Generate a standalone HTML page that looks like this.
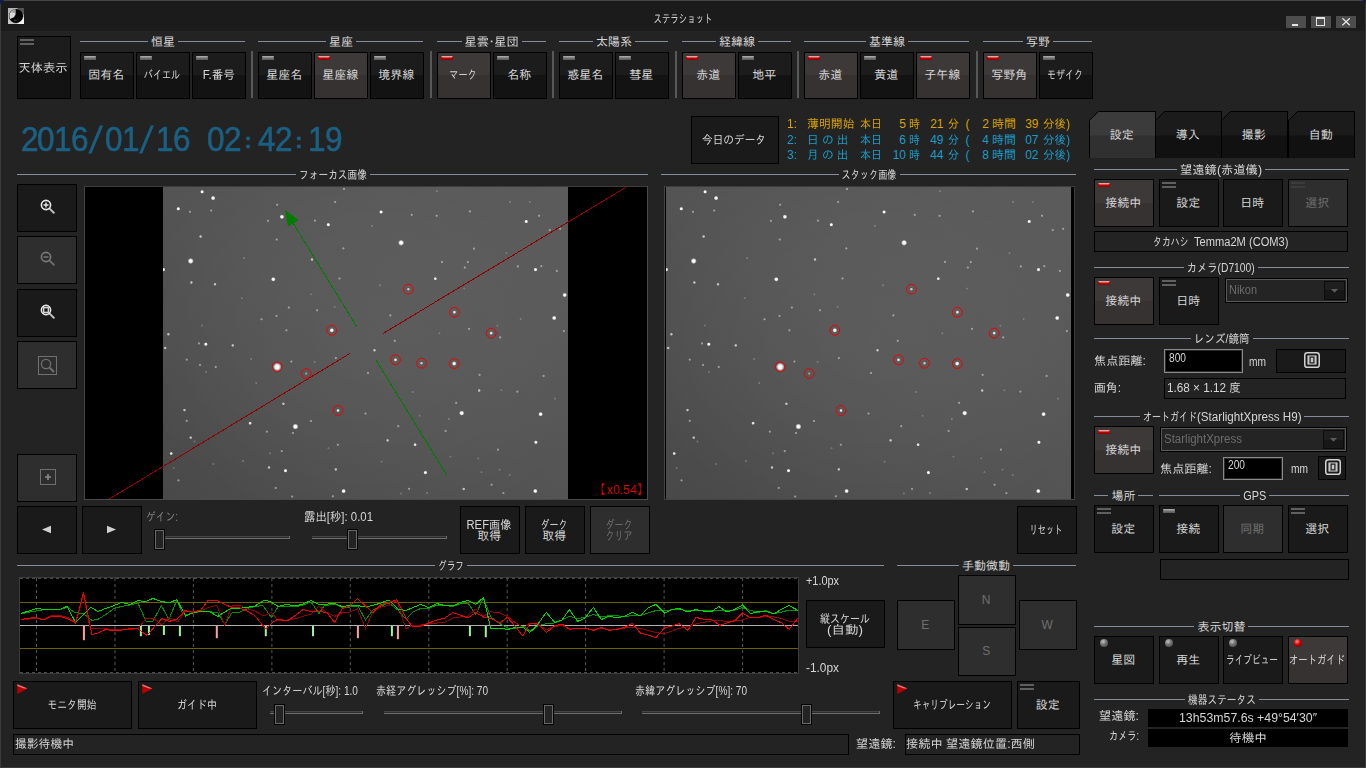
<!DOCTYPE html><html lang="ja"><head><meta charset="utf-8"><title>ステラショット</title><style>html,body{margin:0;padding:0;background:#232323;overflow:hidden}#w{position:relative;width:1366px;height:768px;overflow:hidden;font-family:"Liberation Sans","IPAGothic",sans-serif;font-size:12px}#w>div,#w>svg,#w>span{position:absolute;display:block}.t{white-space:pre}</style></head><body><div id="w"><div style="left:0px;top:0px;width:1366px;height:768px;background:#232323"></div><div style="left:0px;top:0px;width:1366px;height:31px;background:#1b1b1b"></div><div style="left:0px;top:0px;width:1366px;height:1px;background:#444"></div><div style="left:0px;top:0px;width:1px;height:768px;background:#3a3a3a"></div><div style="left:1365px;top:0px;width:1px;height:768px;background:#3a3a3a"></div><div style="left:0px;top:767px;width:1366px;height:1px;background:#3a3a3a"></div><svg style="left:0;top:0" width="4" height="4"><polygon points="0,0 4,0 0,4" fill="#0a2050"/></svg><svg style="left:1362px;top:0" width="4" height="4"><polygon points="0,0 4,0 4,4" fill="#0a2050"/></svg><svg style="left:8px;top:8px" width="16" height="16" viewBox="0 0 16 16"><rect width="16" height="16" fill="#b4b4b4"/><polygon points="9,0 16,0 16,7" fill="#555"/><polygon points="9,16 16,16 16,9" fill="#f4f4f4"/><polygon points="0,10 0,16 6,16" fill="#c8c8c8"/><circle cx="8" cy="8" r="7.1" fill="#000"/><path d="M7.6 8.6 L7.4 1.3 A6.8 6.8 0 0 0 2 11 Z" fill="#d8d8d8"/><path d="M3.2 4.2 A6.6 6.6 0 0 1 7.4 1.4 L7.5 5 Z" fill="#9a9a9a"/><circle cx="8" cy="8.6" r="1.6" fill="#000"/><path d="M6.2 11.6 A3.8 3.8 0 0 0 11.6 8.6 A5 5 0 0 1 6.2 12.6 Z" fill="#6a6a6a"/></svg><span id="t0" class="t" style="font-size:12px;color:#d6d6d6;transform:scaleX(0.7024);left:682.5px;margin-left:-42.00px;transform-origin:50% 50%;top:10.5px;line-height:16px;height:16px;">ステラショット</span><div style="left:1286px;top:16px;width:20px;height:12px;background:#4d4d4d"></div><div style="left:1311px;top:16px;width:20px;height:12px;background:#4d4d4d"></div><div style="left:1336px;top:16px;width:20px;height:12px;background:#4d4d4d"></div><div style="left:1292px;top:24px;width:6px;height:2px;background:#e4e4e4"></div><div style="left:1316px;top:17px;width:7px;height:6px;border:1px solid #e4e4e4;border-top-width:2px"></div><svg style="left:1342px;top:18px" width="8" height="8" viewBox="0 0 8 8"><path d="M0.4 0.3 L7.8 7.3 M7.8 0.3 L0.4 7.3" stroke="#e8e8e8" stroke-width="1.3"/></svg><div style="left:17px;top:36px;width:52px;height:61px;border:1px solid #000;background:linear-gradient(#1c1c1c 50%,#131313 50%)"></div><div style="left:20px;top:39px;width:14px;height:2px;background:#606060"></div><div style="left:20px;top:43px;width:14px;height:2px;background:#606060"></div><span id="t1" class="t" style="font-size:12px;color:#d6d6d6;transform:scaleX(1.0208);left:43.2px;margin-left:-24.00px;transform-origin:50% 50%;top:59.55px;line-height:16px;height:16px;">天体表示</span><div style="left:80px;top:41px;width:68px;height:1px;background:#848d9a"></div><div style="left:178px;top:41px;width:67px;height:1px;background:#848d9a"></div><span id="t2" class="t" style="font-size:12px;color:#d6d6d6;transform:scaleX(1.0000);left:163.0px;margin-left:-12.00px;transform-origin:50% 50%;top:33.5px;line-height:16px;height:16px;">恒星</span><div style="left:80px;top:52px;width:52px;height:45px;border:1px solid #000;background:linear-gradient(#1c1c1c 50%,#131313 50%)"></div><svg style="left:84px;top:56px" width="12" height="4"><rect width="12" height="4" fill="#6e6e6e"/><polygon points="0,0 12,0 10.6,1.4 1.4,1.4" fill="#a6a6a6"/><rect y="3.2" width="12" height=".8" fill="#5a5a5a"/></svg><span id="t3" class="t" style="font-size:12px;color:#d6d6d6;transform:scaleX(1.0000);left:106.2px;margin-left:-18.00px;transform-origin:50% 50%;top:66.75px;line-height:16px;height:16px;">固有名</span><div style="left:136px;top:52px;width:52px;height:45px;border:1px solid #000;background:linear-gradient(#1c1c1c 50%,#131313 50%)"></div><svg style="left:140px;top:56px" width="12" height="4"><rect width="12" height="4" fill="#6e6e6e"/><polygon points="0,0 12,0 10.6,1.4 1.4,1.4" fill="#a6a6a6"/><rect y="3.2" width="12" height=".8" fill="#5a5a5a"/></svg><span id="t4" class="t" style="font-size:12px;color:#d6d6d6;transform:scaleX(0.7604);left:162.2px;margin-left:-24.00px;transform-origin:50% 50%;top:66.75px;line-height:16px;height:16px;">バイエル</span><div style="left:192px;top:52px;width:52px;height:45px;border:1px solid #000;background:linear-gradient(#1c1c1c 50%,#131313 50%)"></div><svg style="left:196px;top:56px" width="12" height="4"><rect width="12" height="4" fill="#6e6e6e"/><polygon points="0,0 12,0 10.6,1.4 1.4,1.4" fill="#a6a6a6"/><rect y="3.2" width="12" height=".8" fill="#5a5a5a"/></svg><span id="t5" class="t" style="font-size:12px;color:#d6d6d6;transform:scaleX(0.9597);left:218.2px;margin-left:-16.67px;transform-origin:50% 50%;top:66.75px;line-height:16px;height:16px;">F.番号</span><div style="left:251px;top:51px;width:2px;height:47px;background:#585858"></div><div style="left:258px;top:41px;width:68px;height:1px;background:#848d9a"></div><div style="left:356px;top:41px;width:67px;height:1px;background:#848d9a"></div><span id="t6" class="t" style="font-size:12px;color:#d6d6d6;transform:scaleX(1.0000);left:341.0px;margin-left:-12.00px;transform-origin:50% 50%;top:33.5px;line-height:16px;height:16px;">星座</span><div style="left:258px;top:52px;width:52px;height:45px;border:1px solid #000;background:linear-gradient(#1c1c1c 50%,#131313 50%)"></div><svg style="left:262px;top:56px" width="12" height="4"><rect width="12" height="4" fill="#6e6e6e"/><polygon points="0,0 12,0 10.6,1.4 1.4,1.4" fill="#a6a6a6"/><rect y="3.2" width="12" height=".8" fill="#5a5a5a"/></svg><span id="t7" class="t" style="font-size:12px;color:#d6d6d6;transform:scaleX(1.0000);left:284.2px;margin-left:-18.00px;transform-origin:50% 50%;top:66.75px;line-height:16px;height:16px;">星座名</span><div style="left:314px;top:52px;width:52px;height:45px;border:1px solid #000;background:linear-gradient(#3d3939 50%,#363232 50%)"></div><svg style="left:318px;top:56px" width="12" height="4"><rect width="12" height="4" fill="#b40000"/><polygon points="0,0 12,0 10.6,1.4 1.4,1.4" fill="#e8a4a4"/><rect y="3.2" width="12" height=".8" fill="#8e0000"/></svg><span id="t8" class="t" style="font-size:12px;color:#d6d6d6;transform:scaleX(1.0000);left:340.2px;margin-left:-18.00px;transform-origin:50% 50%;top:66.75px;line-height:16px;height:16px;">星座線</span><div style="left:370px;top:52px;width:52px;height:45px;border:1px solid #000;background:linear-gradient(#1c1c1c 50%,#131313 50%)"></div><svg style="left:374px;top:56px" width="12" height="4"><rect width="12" height="4" fill="#6e6e6e"/><polygon points="0,0 12,0 10.6,1.4 1.4,1.4" fill="#a6a6a6"/><rect y="3.2" width="12" height=".8" fill="#5a5a5a"/></svg><span id="t9" class="t" style="font-size:12px;color:#d6d6d6;transform:scaleX(1.0000);left:396.2px;margin-left:-18.00px;transform-origin:50% 50%;top:66.75px;line-height:16px;height:16px;">境界線</span><div style="left:430px;top:51px;width:2px;height:47px;background:#585858"></div><div style="left:437px;top:41px;width:25px;height:1px;background:#848d9a"></div><div style="left:522px;top:41px;width:24px;height:1px;background:#848d9a"></div><span id="t10" class="t" style="font-size:12px;color:#d6d6d6;transform:scaleX(1.0147);left:492.0px;margin-left:-26.61px;transform-origin:50% 50%;top:33.5px;line-height:16px;height:16px;">星雲<span style="margin:0 -3.4px">・</span>星団</span><div style="left:437px;top:52px;width:52px;height:45px;border:1px solid #000;background:linear-gradient(#3d3939 50%,#363232 50%)"></div><svg style="left:441px;top:56px" width="12" height="4"><rect width="12" height="4" fill="#b40000"/><polygon points="0,0 12,0 10.6,1.4 1.4,1.4" fill="#e8a4a4"/><rect y="3.2" width="12" height=".8" fill="#8e0000"/></svg><span id="t11" class="t" style="font-size:12px;color:#d6d6d6;transform:scaleX(0.7639);left:463.2px;margin-left:-18.00px;transform-origin:50% 50%;top:66.75px;line-height:16px;height:16px;">マーク</span><div style="left:493px;top:52px;width:52px;height:45px;border:1px solid #000;background:linear-gradient(#1c1c1c 50%,#131313 50%)"></div><svg style="left:497px;top:56px" width="12" height="4"><rect width="12" height="4" fill="#6e6e6e"/><polygon points="0,0 12,0 10.6,1.4 1.4,1.4" fill="#a6a6a6"/><rect y="3.2" width="12" height=".8" fill="#5a5a5a"/></svg><span id="t12" class="t" style="font-size:12px;color:#d6d6d6;transform:scaleX(1.0000);left:519.2px;margin-left:-12.00px;transform-origin:50% 50%;top:66.75px;line-height:16px;height:16px;">名称</span><div style="left:552px;top:51px;width:2px;height:47px;background:#585858"></div><div style="left:559px;top:41px;width:34px;height:1px;background:#848d9a"></div><div style="left:635px;top:41px;width:33px;height:1px;background:#848d9a"></div><span id="t13" class="t" style="font-size:12px;color:#d6d6d6;transform:scaleX(1.0000);left:614.0px;margin-left:-18.00px;transform-origin:50% 50%;top:33.5px;line-height:16px;height:16px;">太陽系</span><div style="left:559px;top:52px;width:52px;height:45px;border:1px solid #000;background:linear-gradient(#1c1c1c 50%,#131313 50%)"></div><svg style="left:563px;top:56px" width="12" height="4"><rect width="12" height="4" fill="#6e6e6e"/><polygon points="0,0 12,0 10.6,1.4 1.4,1.4" fill="#a6a6a6"/><rect y="3.2" width="12" height=".8" fill="#5a5a5a"/></svg><span id="t14" class="t" style="font-size:12px;color:#d6d6d6;transform:scaleX(1.0000);left:585.2px;margin-left:-18.00px;transform-origin:50% 50%;top:66.75px;line-height:16px;height:16px;">惑星名</span><div style="left:615px;top:52px;width:52px;height:45px;border:1px solid #000;background:linear-gradient(#1c1c1c 50%,#131313 50%)"></div><svg style="left:619px;top:56px" width="12" height="4"><rect width="12" height="4" fill="#6e6e6e"/><polygon points="0,0 12,0 10.6,1.4 1.4,1.4" fill="#a6a6a6"/><rect y="3.2" width="12" height=".8" fill="#5a5a5a"/></svg><span id="t15" class="t" style="font-size:12px;color:#d6d6d6;transform:scaleX(1.0000);left:641.2px;margin-left:-12.00px;transform-origin:50% 50%;top:66.75px;line-height:16px;height:16px;">彗星</span><div style="left:675px;top:51px;width:2px;height:47px;background:#585858"></div><div style="left:682px;top:41px;width:34px;height:1px;background:#848d9a"></div><div style="left:758px;top:41px;width:33px;height:1px;background:#848d9a"></div><span id="t16" class="t" style="font-size:12px;color:#d6d6d6;transform:scaleX(1.0000);left:737.0px;margin-left:-18.00px;transform-origin:50% 50%;top:33.5px;line-height:16px;height:16px;">経緯線</span><div style="left:682px;top:52px;width:52px;height:45px;border:1px solid #000;background:linear-gradient(#3d3939 50%,#363232 50%)"></div><svg style="left:686px;top:56px" width="12" height="4"><rect width="12" height="4" fill="#b40000"/><polygon points="0,0 12,0 10.6,1.4 1.4,1.4" fill="#e8a4a4"/><rect y="3.2" width="12" height=".8" fill="#8e0000"/></svg><span id="t17" class="t" style="font-size:12px;color:#d6d6d6;transform:scaleX(1.0000);left:708.2px;margin-left:-12.00px;transform-origin:50% 50%;top:66.75px;line-height:16px;height:16px;">赤道</span><div style="left:738px;top:52px;width:52px;height:45px;border:1px solid #000;background:linear-gradient(#1c1c1c 50%,#131313 50%)"></div><svg style="left:742px;top:56px" width="12" height="4"><rect width="12" height="4" fill="#6e6e6e"/><polygon points="0,0 12,0 10.6,1.4 1.4,1.4" fill="#a6a6a6"/><rect y="3.2" width="12" height=".8" fill="#5a5a5a"/></svg><span id="t18" class="t" style="font-size:12px;color:#d6d6d6;transform:scaleX(1.0000);left:764.2px;margin-left:-12.00px;transform-origin:50% 50%;top:66.75px;line-height:16px;height:16px;">地平</span><div style="left:797px;top:51px;width:2px;height:47px;background:#585858"></div><div style="left:804px;top:41px;width:62px;height:1px;background:#848d9a"></div><div style="left:908px;top:41px;width:61px;height:1px;background:#848d9a"></div><span id="t19" class="t" style="font-size:12px;color:#d6d6d6;transform:scaleX(1.0000);left:887.0px;margin-left:-18.00px;transform-origin:50% 50%;top:33.5px;line-height:16px;height:16px;">基準線</span><div style="left:804px;top:52px;width:52px;height:45px;border:1px solid #000;background:linear-gradient(#3d3939 50%,#363232 50%)"></div><svg style="left:808px;top:56px" width="12" height="4"><rect width="12" height="4" fill="#b40000"/><polygon points="0,0 12,0 10.6,1.4 1.4,1.4" fill="#e8a4a4"/><rect y="3.2" width="12" height=".8" fill="#8e0000"/></svg><span id="t20" class="t" style="font-size:12px;color:#d6d6d6;transform:scaleX(1.0000);left:830.2px;margin-left:-12.00px;transform-origin:50% 50%;top:66.75px;line-height:16px;height:16px;">赤道</span><div style="left:860px;top:52px;width:52px;height:45px;border:1px solid #000;background:linear-gradient(#1c1c1c 50%,#131313 50%)"></div><svg style="left:864px;top:56px" width="12" height="4"><rect width="12" height="4" fill="#6e6e6e"/><polygon points="0,0 12,0 10.6,1.4 1.4,1.4" fill="#a6a6a6"/><rect y="3.2" width="12" height=".8" fill="#5a5a5a"/></svg><span id="t21" class="t" style="font-size:12px;color:#d6d6d6;transform:scaleX(1.0000);left:886.2px;margin-left:-12.00px;transform-origin:50% 50%;top:66.75px;line-height:16px;height:16px;">黄道</span><div style="left:916px;top:52px;width:52px;height:45px;border:1px solid #000;background:linear-gradient(#3d3939 50%,#363232 50%)"></div><svg style="left:920px;top:56px" width="12" height="4"><rect width="12" height="4" fill="#b40000"/><polygon points="0,0 12,0 10.6,1.4 1.4,1.4" fill="#e8a4a4"/><rect y="3.2" width="12" height=".8" fill="#8e0000"/></svg><span id="t22" class="t" style="font-size:12px;color:#d6d6d6;transform:scaleX(1.0000);left:942.2px;margin-left:-18.00px;transform-origin:50% 50%;top:66.75px;line-height:16px;height:16px;">子午線</span><div style="left:976px;top:51px;width:2px;height:47px;background:#585858"></div><div style="left:983px;top:41px;width:40px;height:1px;background:#848d9a"></div><div style="left:1053px;top:41px;width:39px;height:1px;background:#848d9a"></div><span id="t23" class="t" style="font-size:12px;color:#d6d6d6;transform:scaleX(1.0000);left:1038.0px;margin-left:-12.00px;transform-origin:50% 50%;top:33.5px;line-height:16px;height:16px;">写野</span><div style="left:983px;top:52px;width:52px;height:45px;border:1px solid #000;background:linear-gradient(#3d3939 50%,#363232 50%)"></div><svg style="left:987px;top:56px" width="12" height="4"><rect width="12" height="4" fill="#b40000"/><polygon points="0,0 12,0 10.6,1.4 1.4,1.4" fill="#e8a4a4"/><rect y="3.2" width="12" height=".8" fill="#8e0000"/></svg><span id="t24" class="t" style="font-size:12px;color:#d6d6d6;transform:scaleX(1.0000);left:1009.2px;margin-left:-18.00px;transform-origin:50% 50%;top:66.75px;line-height:16px;height:16px;">写野角</span><div style="left:1039px;top:52px;width:52px;height:45px;border:1px solid #000;background:linear-gradient(#1c1c1c 50%,#131313 50%)"></div><svg style="left:1043px;top:56px" width="12" height="4"><rect width="12" height="4" fill="#6e6e6e"/><polygon points="0,0 12,0 10.6,1.4 1.4,1.4" fill="#a6a6a6"/><rect y="3.2" width="12" height=".8" fill="#5a5a5a"/></svg><span id="t25" class="t" style="font-size:12px;color:#d6d6d6;transform:scaleX(0.7500);left:1065.2px;margin-left:-24.00px;transform-origin:50% 50%;top:66.75px;line-height:16px;height:16px;">モザイク</span><div style="left:19.5px;top:114px;height:50px;line-height:50px;display:flex;font-size:35px;color:#1b6083;-webkit-text-stroke:.6px #1b6083;white-space:pre"><span style="display:block;width:16.95px;text-align:center"><span style="display:inline-block;transform:scaleX(.9)">2</span></span><span style="display:block;width:16.95px;text-align:center"><span style="display:inline-block;transform:scaleX(.9)">0</span></span><span style="display:block;width:16.95px;text-align:center"><span style="display:inline-block;transform:scaleX(.9)">1</span></span><span style="display:block;width:16.95px;text-align:center"><span style="display:inline-block;transform:scaleX(.9)">6</span></span><span style="display:block;width:16.95px;text-align:center"><span style="display:inline-block;font-family:'Liberation Mono',monospace;font-size:28.25px;transform:scaleY(1.3)">/</span></span><span style="display:block;width:16.95px;text-align:center"><span style="display:inline-block;transform:scaleX(.9)">0</span></span><span style="display:block;width:16.95px;text-align:center"><span style="display:inline-block;transform:scaleX(.9)">1</span></span><span style="display:block;width:16.95px;text-align:center"><span style="display:inline-block;font-family:'Liberation Mono',monospace;font-size:28.25px;transform:scaleY(1.3)">/</span></span><span style="display:block;width:16.95px;text-align:center"><span style="display:inline-block;transform:scaleX(.9)">1</span></span><span style="display:block;width:16.95px;text-align:center"><span style="display:inline-block;transform:scaleX(.9)">6</span></span><span style="display:block;width:16.95px;text-align:center"><span style="display:inline-block;transform:scaleX(.9)"> </span></span><span style="display:block;width:16.95px;text-align:center"><span style="display:inline-block;transform:scaleX(.9)">0</span></span><span style="display:block;width:16.95px;text-align:center"><span style="display:inline-block;transform:scaleX(.9)">2</span></span><span style="display:block;width:16.95px;text-align:center"><span style="display:inline-block;font-weight:bold;font-size:22px;-webkit-text-stroke:.4px #1b6083;transform:translateY(-3.2px)">:</span></span><span style="display:block;width:16.95px;text-align:center"><span style="display:inline-block;transform:scaleX(.9)">4</span></span><span style="display:block;width:16.95px;text-align:center"><span style="display:inline-block;transform:scaleX(.9)">2</span></span><span style="display:block;width:16.95px;text-align:center"><span style="display:inline-block;font-weight:bold;font-size:22px;-webkit-text-stroke:.4px #1b6083;transform:translateY(-3.2px)">:</span></span><span style="display:block;width:16.95px;text-align:center"><span style="display:inline-block;transform:scaleX(.9)">1</span></span><span style="display:block;width:16.95px;text-align:center"><span style="display:inline-block;transform:scaleX(.9)">9</span></span></div><div style="left:691px;top:116px;width:86px;height:46px;border:1px solid #000;background:#1a1a1a"></div><span id="t26" class="t" style="font-size:12px;color:#d6d6d6;transform:scaleX(0.8889);left:734.2px;margin-left:-36.00px;transform-origin:50% 50%;top:131.75px;line-height:16px;height:16px;">今日のデータ</span><span id="t27" class="t" style="font-size:12px;color:#d9a300;transform:scaleX(0.9984);left:787px;transform-origin:0 50%;top:116.0px;line-height:16px;height:16px;">1:</span><span id="t28" class="t" style="font-size:12px;color:#d9a300;transform:scaleX(0.9896);left:806.5px;transform-origin:0 50%;top:116.0px;line-height:16px;height:16px;">薄明開始</span><span id="t29" class="t" style="font-size:12px;color:#d9a300;transform:scaleX(0.9167);left:859.5px;transform-origin:0 50%;top:116.0px;line-height:16px;height:16px;">本日</span><span id="t30" class="t" style="font-size:12px;color:#d9a300;left:906px;margin-left:-6.69px;transform-origin:100% 50%;top:116.0px;line-height:16px;height:16px;">5</span><span id="t31" class="t" style="font-size:12px;color:#d9a300;transform:scaleX(0.9167);left:909px;transform-origin:0 50%;top:116.0px;line-height:16px;height:16px;">時</span><span id="t32" class="t" style="font-size:12px;color:#d9a300;left:943.5px;margin-left:-13.36px;transform-origin:100% 50%;top:116.0px;line-height:16px;height:16px;">21</span><span id="t33" class="t" style="font-size:12px;color:#d9a300;transform:scaleX(0.9167);left:948px;transform-origin:0 50%;top:116.0px;line-height:16px;height:16px;">分</span><span id="t34" class="t" style="font-size:12px;color:#d9a300;left:965.5px;transform-origin:0 50%;top:116.0px;line-height:16px;height:16px;">(</span><span id="t35" class="t" style="font-size:12px;color:#d9a300;left:989px;margin-left:-6.69px;transform-origin:100% 50%;top:116.0px;line-height:16px;height:16px;">2</span><span id="t36" class="t" style="font-size:12px;color:#d9a300;transform:scaleX(1.0000);left:992px;transform-origin:0 50%;top:116.0px;line-height:16px;height:16px;">時間</span><span id="t37" class="t" style="font-size:12px;color:#d9a300;left:1038.5px;margin-left:-13.36px;transform-origin:100% 50%;top:116.0px;line-height:16px;height:16px;">39</span><span id="t38" class="t" style="font-size:12px;color:#d9a300;transform:scaleX(0.9643);left:1043px;transform-origin:0 50%;top:116.0px;line-height:16px;height:16px;">分後)</span><span id="t39" class="t" style="font-size:12px;color:#1a9cc9;transform:scaleX(0.9984);left:787px;transform-origin:0 50%;top:131.5px;line-height:16px;height:16px;">2:</span><span id="t40" class="t" style="font-size:12px;color:#1a9cc9;transform:scaleX(0.9725);left:806.5px;transform-origin:0 50%;top:131.5px;line-height:16px;height:16px;">日 の 出</span><span id="t41" class="t" style="font-size:12px;color:#1a9cc9;transform:scaleX(0.9167);left:859.5px;transform-origin:0 50%;top:131.5px;line-height:16px;height:16px;">本日</span><span id="t42" class="t" style="font-size:12px;color:#1a9cc9;left:906px;margin-left:-6.69px;transform-origin:100% 50%;top:131.5px;line-height:16px;height:16px;">6</span><span id="t43" class="t" style="font-size:12px;color:#1a9cc9;transform:scaleX(0.9167);left:909px;transform-origin:0 50%;top:131.5px;line-height:16px;height:16px;">時</span><span id="t44" class="t" style="font-size:12px;color:#1a9cc9;left:943.5px;margin-left:-13.36px;transform-origin:100% 50%;top:131.5px;line-height:16px;height:16px;">49</span><span id="t45" class="t" style="font-size:12px;color:#1a9cc9;transform:scaleX(0.9167);left:948px;transform-origin:0 50%;top:131.5px;line-height:16px;height:16px;">分</span><span id="t46" class="t" style="font-size:12px;color:#1a9cc9;left:965.5px;transform-origin:0 50%;top:131.5px;line-height:16px;height:16px;">(</span><span id="t47" class="t" style="font-size:12px;color:#1a9cc9;left:989px;margin-left:-6.69px;transform-origin:100% 50%;top:131.5px;line-height:16px;height:16px;">4</span><span id="t48" class="t" style="font-size:12px;color:#1a9cc9;transform:scaleX(1.0000);left:992px;transform-origin:0 50%;top:131.5px;line-height:16px;height:16px;">時間</span><span id="t49" class="t" style="font-size:12px;color:#1a9cc9;left:1038.5px;margin-left:-13.36px;transform-origin:100% 50%;top:131.5px;line-height:16px;height:16px;">07</span><span id="t50" class="t" style="font-size:12px;color:#1a9cc9;transform:scaleX(0.9643);left:1043px;transform-origin:0 50%;top:131.5px;line-height:16px;height:16px;">分後)</span><span id="t51" class="t" style="font-size:12px;color:#1a9cc9;transform:scaleX(0.9984);left:787px;transform-origin:0 50%;top:147.0px;line-height:16px;height:16px;">3:</span><span id="t52" class="t" style="font-size:12px;color:#1a9cc9;transform:scaleX(0.9725);left:806.5px;transform-origin:0 50%;top:147.0px;line-height:16px;height:16px;">月 の 出</span><span id="t53" class="t" style="font-size:12px;color:#1a9cc9;transform:scaleX(0.9167);left:859.5px;transform-origin:0 50%;top:147.0px;line-height:16px;height:16px;">本日</span><span id="t54" class="t" style="font-size:12px;color:#1a9cc9;left:906px;margin-left:-13.36px;transform-origin:100% 50%;top:147.0px;line-height:16px;height:16px;">10</span><span id="t55" class="t" style="font-size:12px;color:#1a9cc9;transform:scaleX(0.9167);left:909px;transform-origin:0 50%;top:147.0px;line-height:16px;height:16px;">時</span><span id="t56" class="t" style="font-size:12px;color:#1a9cc9;left:943.5px;margin-left:-13.36px;transform-origin:100% 50%;top:147.0px;line-height:16px;height:16px;">44</span><span id="t57" class="t" style="font-size:12px;color:#1a9cc9;transform:scaleX(0.9167);left:948px;transform-origin:0 50%;top:147.0px;line-height:16px;height:16px;">分</span><span id="t58" class="t" style="font-size:12px;color:#1a9cc9;left:965.5px;transform-origin:0 50%;top:147.0px;line-height:16px;height:16px;">(</span><span id="t59" class="t" style="font-size:12px;color:#1a9cc9;left:989px;margin-left:-6.69px;transform-origin:100% 50%;top:147.0px;line-height:16px;height:16px;">8</span><span id="t60" class="t" style="font-size:12px;color:#1a9cc9;transform:scaleX(1.0000);left:992px;transform-origin:0 50%;top:147.0px;line-height:16px;height:16px;">時間</span><span id="t61" class="t" style="font-size:12px;color:#1a9cc9;left:1038.5px;margin-left:-13.36px;transform-origin:100% 50%;top:147.0px;line-height:16px;height:16px;">02</span><span id="t62" class="t" style="font-size:12px;color:#1a9cc9;transform:scaleX(0.9643);left:1043px;transform-origin:0 50%;top:147.0px;line-height:16px;height:16px;">分後)</span><svg style="left:1085px;top:108px" width="275" height="54" viewBox="1085 108 275 54"><polygon points="1089.5,158 1089.5,120.5 1098.5,111.5 1155.5,111.5 1155.5,158" fill="#303030"/><polygon points="1089.5,135.5 1089.5,120.5 1098.5,111.5 1155.5,111.5 1155.5,135.5" fill="#3b3b3b"/><polyline points="1089.5,158 1089.5,120.5 1098.5,111.5 1155.5,111.5 1155.5,158" fill="none" stroke="#000" stroke-width="1"/><polygon points="1155.5,158 1155.5,120.5 1164.5,111.5 1221.5,111.5 1221.5,158" fill="#111"/><polygon points="1155.5,135.5 1155.5,120.5 1164.5,111.5 1221.5,111.5 1221.5,135.5" fill="#1b1b1b"/><polyline points="1155.5,158 1155.5,120.5 1164.5,111.5 1221.5,111.5 1221.5,158" fill="none" stroke="#000" stroke-width="1"/><polygon points="1221.5,158 1221.5,120.5 1230.5,111.5 1287.5,111.5 1287.5,158" fill="#111"/><polygon points="1221.5,135.5 1221.5,120.5 1230.5,111.5 1287.5,111.5 1287.5,135.5" fill="#1b1b1b"/><polyline points="1221.5,158 1221.5,120.5 1230.5,111.5 1287.5,111.5 1287.5,158" fill="none" stroke="#000" stroke-width="1"/><polygon points="1288.5,158 1288.5,120.5 1297.5,111.5 1354.5,111.5 1354.5,158" fill="#111"/><polygon points="1288.5,135.5 1288.5,120.5 1297.5,111.5 1354.5,111.5 1354.5,135.5" fill="#1b1b1b"/><polyline points="1288.5,158 1288.5,120.5 1297.5,111.5 1354.5,111.5 1354.5,158" fill="none" stroke="#000" stroke-width="1"/></svg><span id="t63" class="t" style="font-size:12px;color:#d6d6d6;transform:scaleX(1.0000);left:1121.7px;margin-left:-12.00px;transform-origin:50% 50%;top:127.0px;line-height:16px;height:16px;">設定</span><span id="t64" class="t" style="font-size:12px;color:#d6d6d6;transform:scaleX(1.0000);left:1187.7px;margin-left:-12.00px;transform-origin:50% 50%;top:127.0px;line-height:16px;height:16px;">導入</span><span id="t65" class="t" style="font-size:12px;color:#d6d6d6;transform:scaleX(1.0000);left:1253.7px;margin-left:-12.00px;transform-origin:50% 50%;top:127.0px;line-height:16px;height:16px;">撮影</span><span id="t66" class="t" style="font-size:12px;color:#d6d6d6;transform:scaleX(1.0000);left:1320.7px;margin-left:-12.00px;transform-origin:50% 50%;top:127.0px;line-height:16px;height:16px;">自動</span><div style="left:17px;top:174px;width:279px;height:1px;background:#848d9a"></div><div style="left:370px;top:174px;width:278px;height:1px;background:#848d9a"></div><span id="t67" class="t" style="font-size:12px;color:#d6d6d6;transform:scaleX(0.8095);left:333px;margin-left:-42.00px;transform-origin:50% 50%;top:166.5px;line-height:16px;height:16px;">フォーカス画像</span><div style="left:661px;top:174px;width:178px;height:1px;background:#848d9a"></div><div style="left:900px;top:174px;width:176px;height:1px;background:#848d9a"></div><span id="t68" class="t" style="font-size:12px;color:#d6d6d6;transform:scaleX(0.7639);left:869px;margin-left:-36.00px;transform-origin:50% 50%;top:166.5px;line-height:16px;height:16px;">スタック画像</span><div style="left:17px;top:184px;width:58px;height:46px;border:1px solid #000;background:#1a1a1a"></div><svg style="left:40px;top:199px" width="16" height="16" viewBox="0 0 16 16"><circle cx="6" cy="6" r="4.6" fill="none" stroke="#e8e8e8" stroke-width="1.6"/><path d="M9.6 9.6 L13.8 13.8" stroke="#e8e8e8" stroke-opacity=".8" stroke-width="2" stroke-linecap="round"/><path d="M3.5 6 H8.5 M6 3.5 V8.5" stroke="#e8e8e8" stroke-width="1.4"/></svg><div style="left:17px;top:236px;width:58px;height:46px;border:1px solid #000;background:#2e2e2e"></div><svg style="left:40px;top:251px" width="16" height="16" viewBox="0 0 16 16"><circle cx="6" cy="6" r="4.6" fill="none" stroke="#7a7a7a" stroke-width="1.6"/><path d="M9.6 9.6 L13.8 13.8" stroke="#7a7a7a" stroke-opacity=".8" stroke-width="2" stroke-linecap="round"/><path d="M3.5 6 H8.5" stroke="#7a7a7a" stroke-width="1.4"/></svg><div style="left:17px;top:289px;width:58px;height:46px;border:1px solid #000;background:#1a1a1a"></div><svg style="left:40px;top:304px" width="16" height="16" viewBox="0 0 16 16"><circle cx="6" cy="6" r="4.6" fill="none" stroke="#e8e8e8" stroke-width="1.6"/><path d="M9.6 9.6 L13.8 13.8" stroke="#e8e8e8" stroke-opacity=".8" stroke-width="2" stroke-linecap="round"/><rect x="3.7" y="3.7" width="4.6" height="4.6" fill="none" stroke="#e8e8e8" stroke-width="1.2"/></svg><div style="left:17px;top:341px;width:58px;height:46px;border:1px solid #000;background:#2e2e2e"></div><svg style="left:38px;top:356px" width="19" height="19" viewBox="0 0 19 19"><rect x="0.5" y="0.5" width="18" height="18" fill="none" stroke="#707070"/><circle cx="8" cy="8" r="4.6" fill="none" stroke="#707070" stroke-width="1.3"/><path d="M11.5 11.5 L16 16" stroke="#707070" stroke-width="2"/></svg><div style="left:17px;top:454px;width:58px;height:46px;border:1px solid #000;background:#2e2e2e"></div><svg style="left:40px;top:469px" width="16" height="16" viewBox="0 0 16 16"><rect x="0.5" y="0.5" width="15" height="15" fill="none" stroke="#707070"/><path d="M5 8 H11 M8 5 V11" stroke="#8a8a8a" stroke-width="1.6"/></svg><div style="left:17px;top:506px;width:58px;height:46px;border:1px solid #000;background:#1a1a1a"></div><div style="left:82px;top:506px;width:58px;height:46px;border:1px solid #000;background:#1a1a1a"></div><svg style="left:42px;top:525px" width="10" height="9"><polygon points="9,0.8 9,8.2 0,4.5" fill="#d0d0d0"/></svg><svg style="left:107px;top:525px" width="10" height="9"><polygon points="0,0.8 0,8.2 9,4.5" fill="#d0d0d0"/></svg><div style="left:84px;top:186px;width:564px;height:314px;background:#000;border-left:1px solid #444;border-top:1px solid #3c3c3c;box-sizing:border-box"></div><div style="left:84px;top:499px;width:564px;height:1px;background:#4a4a4a"></div><div style="left:647px;top:186px;width:1px;height:314px;background:#4a4a4a"></div><svg style="left:163px;top:187px" width="405" height="312" viewBox="666 187 405 312"><defs><linearGradient id="fbg" x1="0" y1="1" x2="1" y2="0"><stop offset="0" stop-color="#494949"/><stop offset=".5" stop-color="#545454"/><stop offset="1" stop-color="#5b5b5b"/></linearGradient><radialGradient id="fv" cx=".52" cy=".48" r=".62"><stop offset="0" stop-color="#fff" stop-opacity=".045"/><stop offset=".5" stop-color="#fff" stop-opacity=".03"/><stop offset="1" stop-color="#fff" stop-opacity="0"/></radialGradient><radialGradient id="fs"><stop offset="0" stop-color="#fff"/><stop offset=".45" stop-color="#fff" stop-opacity=".95"/><stop offset="1" stop-color="#fff" stop-opacity="0"/></radialGradient><filter id="fb" x="-5%" y="-5%" width="110%" height="110%"><feGaussianBlur stdDeviation="0.4"/></filter></defs><rect x="666" y="187" width="405" height="312" fill="url(#fbg)"/><rect x="666" y="187" width="405" height="312" fill="url(#fv)"/><g fill="url(#fs)" filter="url(#fb)"><circle cx="705.1" cy="191.8" r="2.05"/><circle cx="716.1" cy="198.1" r="2.4"/><circle cx="681.3" cy="208.8" r="2.05"/><circle cx="692.9" cy="211.8" r="1.55" opacity="0.42"/><circle cx="714.2" cy="210.5" r="1.55" opacity="0.42"/><circle cx="784.9" cy="216.8" r="2.4"/><circle cx="770.9" cy="220.8" r="1.55" opacity="0.42"/><circle cx="831.3" cy="224.7" r="2.05"/><circle cx="818" cy="220.6" r="1.55" opacity="0.42"/><circle cx="838.2" cy="201.9" r="1.55" opacity="0.42"/><circle cx="780.2" cy="204.7" r="1.55" opacity="0.42"/><circle cx="847" cy="189" r="1.55" opacity="0.42"/><circle cx="703.6" cy="236.5" r="1.7" opacity="0.68"/><circle cx="693.7" cy="261" r="3.1"/><circle cx="666.4" cy="269.6" r="2.05"/><circle cx="694.4" cy="282.5" r="1.7" opacity="0.68"/><circle cx="718" cy="284.3" r="1.7" opacity="0.68"/><circle cx="776.3" cy="279.3" r="2.4"/><circle cx="815" cy="259.5" r="1.7" opacity="0.68"/><circle cx="846.4" cy="248.4" r="1.55" opacity="0.42"/><circle cx="842.5" cy="278.5" r="1.55" opacity="0.42"/><circle cx="779.7" cy="239.5" r="1.55" opacity="0.42"/><circle cx="747" cy="258.2" r="1.4" opacity="0.22"/><circle cx="744.7" cy="298.2" r="1.4" opacity="0.22"/><circle cx="791.8" cy="307.5" r="1.55" opacity="0.42"/><circle cx="779.5" cy="315.9" r="1.55" opacity="0.42"/><circle cx="764.5" cy="319.3" r="1.55" opacity="0.42"/><circle cx="820.1" cy="310.3" r="1.55" opacity="0.42"/><circle cx="789.4" cy="330.3" r="1.55" opacity="0.42"/><circle cx="834.8" cy="330.3" r="2.4"/><circle cx="671.4" cy="334.3" r="1.7" opacity="0.68"/><circle cx="705.1" cy="325.5" r="1.4" opacity="0.22"/><circle cx="708.8" cy="344.2" r="2.05"/><circle cx="702" cy="343.4" r="1.55" opacity="0.42"/><circle cx="814.3" cy="294.4" r="1.4" opacity="0.22"/><circle cx="837.6" cy="306.8" r="1.4" opacity="0.22"/><circle cx="884.1" cy="212" r="2.05"/><circle cx="914.7" cy="214.8" r="1.55" opacity="0.42"/><circle cx="939.6" cy="215.7" r="1.55" opacity="0.42"/><circle cx="904.1" cy="242.8" r="3.1"/><circle cx="972.9" cy="211.4" r="1.55" opacity="0.42"/><circle cx="1029.2" cy="221.5" r="2.05"/><circle cx="1042.1" cy="215.7" r="1.55" opacity="0.42"/><circle cx="1063.2" cy="228.8" r="1.55" opacity="0.42"/><circle cx="1052.7" cy="230.1" r="1.55" opacity="0.42"/><circle cx="977" cy="248.6" r="1.55" opacity="0.42"/><circle cx="945" cy="261.9" r="1.55" opacity="0.42"/><circle cx="970.8" cy="262.1" r="1.55" opacity="0.42"/><circle cx="967.8" cy="267.5" r="1.55" opacity="0.42"/><circle cx="1020.8" cy="266.4" r="1.55" opacity="0.42"/><circle cx="1038.5" cy="269.6" r="2.05"/><circle cx="1044.3" cy="266.2" r="1.55" opacity="0.42"/><circle cx="1059.8" cy="270.9" r="1.55" opacity="0.42"/><circle cx="938.3" cy="278.7" r="1.85" opacity="0.88"/><circle cx="911.4" cy="289.2" r="1.7" opacity="0.68"/><circle cx="957.4" cy="312.2" r="1.85" opacity="0.88"/><circle cx="994.2" cy="333.1" r="1.85" opacity="0.88"/><circle cx="1067.7" cy="295" r="2.4"/><circle cx="1057.2" cy="318" r="2.4"/><circle cx="972" cy="328.8" r="1.55" opacity="0.42"/><circle cx="1003.2" cy="337.4" r="1.55" opacity="0.42"/><circle cx="893.4" cy="315.4" r="1.55" opacity="0.42"/><circle cx="897.7" cy="340.8" r="1.55" opacity="0.42"/><circle cx="942.4" cy="333.3" r="1.4" opacity="0.22"/><circle cx="883" cy="285.3" r="1.4" opacity="0.22"/><circle cx="1009.5" cy="253.1" r="1.4" opacity="0.22"/><circle cx="939.8" cy="191.2" r="1.4" opacity="0.22"/><circle cx="1066.8" cy="331.1" r="1.55" opacity="0.42"/><circle cx="1023.6" cy="318.9" r="1.4" opacity="0.22"/><circle cx="967.3" cy="288.6" r="1.4" opacity="0.22"/><circle cx="1000.4" cy="325.7" r="1.4" opacity="0.22"/><circle cx="874.9" cy="225.8" r="1.4" opacity="0.22"/><circle cx="1013.1" cy="201.9" r="1.4" opacity="0.22"/><circle cx="1032.7" cy="201.9" r="1.4" opacity="0.22"/><circle cx="735.7" cy="345.4" r="1.7" opacity="0.68"/><circle cx="668.2" cy="348" r="1.7" opacity="0.68"/><circle cx="689.7" cy="359.6" r="1.55" opacity="0.42"/><circle cx="703" cy="364.9" r="1.55" opacity="0.42"/><circle cx="718.7" cy="366.9" r="1.55" opacity="0.42"/><circle cx="709.2" cy="371.8" r="1.4" opacity="0.22"/><circle cx="754.2" cy="358.9" r="1.4" opacity="0.22"/><circle cx="780.2" cy="366.9" r="4.4"/><circle cx="794.4" cy="361.5" r="1.55" opacity="0.42"/><circle cx="809.2" cy="373.5" r="1.55" opacity="0.42"/><circle cx="838.8" cy="358.1" r="1.55" opacity="0.42"/><circle cx="817.6" cy="361.9" r="1.4" opacity="0.22"/><circle cx="759.3" cy="383" r="1.4" opacity="0.22"/><circle cx="786.4" cy="403.8" r="1.7" opacity="0.68"/><circle cx="841" cy="410.5" r="1.85" opacity="0.88"/><circle cx="687.5" cy="410.1" r="1.7" opacity="0.68"/><circle cx="689.7" cy="420.8" r="1.55" opacity="0.42"/><circle cx="753.1" cy="423.2" r="1.85" opacity="0.88"/><circle cx="798.4" cy="426.6" r="3.1"/><circle cx="813.9" cy="421" r="1.55" opacity="0.42"/><circle cx="795.9" cy="432.9" r="1.55" opacity="0.42"/><circle cx="769.8" cy="431.6" r="1.55" opacity="0.42"/><circle cx="693.7" cy="437.6" r="1.7" opacity="0.68"/><circle cx="697.4" cy="441.5" r="1.4" opacity="0.22"/><circle cx="674.2" cy="453.5" r="1.85" opacity="0.88"/><circle cx="784.7" cy="451.1" r="1.55" opacity="0.42"/><circle cx="840.8" cy="444.7" r="1.55" opacity="0.42"/><circle cx="831.5" cy="448.3" r="1.4" opacity="0.22"/><circle cx="772" cy="467.5" r="1.7" opacity="0.68"/><circle cx="788.5" cy="470.7" r="2.05"/><circle cx="838.8" cy="469.4" r="1.7" opacity="0.68"/><circle cx="681.5" cy="480.4" r="1.55" opacity="0.42"/><circle cx="778.7" cy="487.9" r="1.55" opacity="0.42"/><circle cx="846.6" cy="491.1" r="2.4"/><circle cx="795.2" cy="496.5" r="1.55" opacity="0.42"/><circle cx="835.8" cy="496.3" r="1.55" opacity="0.42"/><circle cx="868.5" cy="413.5" r="1.55" opacity="0.42"/><circle cx="716.3" cy="464" r="1.4" opacity="0.22"/><circle cx="676.6" cy="468.1" r="1.4" opacity="0.22"/><circle cx="773.1" cy="453.3" r="1.4" opacity="0.22"/><circle cx="746" cy="461" r="1.4" opacity="0.22"/><circle cx="898.5" cy="359.8" r="1.85" opacity="0.88"/><circle cx="924.5" cy="363.2" r="1.7" opacity="0.68"/><circle cx="957.2" cy="363.6" r="2.4"/><circle cx="877.5" cy="350.3" r="1.7" opacity="0.68"/><circle cx="871" cy="372.9" r="1.55" opacity="0.42"/><circle cx="982.6" cy="374.8" r="1.55" opacity="0.42"/><circle cx="1046.6" cy="375.9" r="1.55" opacity="0.42"/><circle cx="982.2" cy="390.5" r="1.7" opacity="0.68"/><circle cx="1020.4" cy="391.6" r="1.55" opacity="0.42"/><circle cx="1004.3" cy="390.3" r="1.4" opacity="0.22"/><circle cx="915.7" cy="392" r="1.4" opacity="0.22"/><circle cx="959.2" cy="402.8" r="1.55" opacity="0.42"/><circle cx="964.7" cy="413.1" r="2.7"/><circle cx="1043.6" cy="414.2" r="2.4"/><circle cx="951.8" cy="418.9" r="1.4" opacity="0.22"/><circle cx="922.6" cy="415.7" r="1.4" opacity="0.22"/><circle cx="901.3" cy="426.2" r="1.55" opacity="0.42"/><circle cx="948.6" cy="430.9" r="1.55" opacity="0.42"/><circle cx="890.6" cy="440.4" r="1.7" opacity="0.68"/><circle cx="918.1" cy="444.7" r="1.85" opacity="0.88"/><circle cx="1038.9" cy="442.3" r="2.05"/><circle cx="1000.9" cy="449.6" r="1.55" opacity="0.42"/><circle cx="981.3" cy="458.4" r="1.4" opacity="0.22"/><circle cx="928.4" cy="472.6" r="2.05"/><circle cx="984.5" cy="472.2" r="1.4" opacity="0.22"/><circle cx="1012.7" cy="475" r="1.4" opacity="0.22"/><circle cx="994.6" cy="484.7" r="1.55" opacity="0.42"/><circle cx="966.7" cy="489" r="1.7" opacity="0.68"/><circle cx="1038.3" cy="491.1" r="2.4"/><circle cx="1006.4" cy="493.1" r="1.55" opacity="0.42"/><circle cx="912.1" cy="488.8" r="1.55" opacity="0.42"/><circle cx="930.1" cy="493.1" r="1.4" opacity="0.22"/><circle cx="903.9" cy="493.5" r="1.4" opacity="0.22"/><circle cx="884.6" cy="461.7" r="1.4" opacity="0.22"/><circle cx="1002.6" cy="469.6" r="1.4" opacity="0.22"/><circle cx="953.4" cy="456.7" r="1.4" opacity="0.22"/><circle cx="1058" cy="398.7" r="1.4" opacity="0.22"/></g><g fill="none" stroke="#ee0000" stroke-width="1"><circle cx="911.4" cy="289.2" r="4.9"/><circle cx="957.4" cy="312.2" r="4.9"/><circle cx="994.2" cy="333.1" r="4.9"/><circle cx="834.8" cy="330.3" r="4.9"/><circle cx="780.2" cy="366.9" r="4.9"/><circle cx="809.2" cy="373.5" r="4.9"/><circle cx="898.5" cy="359.8" r="4.9"/><circle cx="924.5" cy="363.2" r="4.9"/><circle cx="957.2" cy="363.6" r="4.9"/><circle cx="841" cy="410.5" r="4.9"/></g></svg><svg style="left:85px;top:187px" width="562" height="312" viewBox="85 187 562 312"><g stroke="#900000" stroke-width="1" fill="none" shape-rendering="crispEdges"><path d="M108.5 499.5 L350 353.4"/><path d="M383 333.5 L628 186"/></g><g stroke="#007c00" stroke-width="1" fill="none" shape-rendering="crispEdges"><path d="M290 218 L356.7 326.6"/><path d="M376 360 L447 475.5"/></g><polygon points="285,210 298.5,220 288,226.5" fill="#007c00"/></svg><span id="t69" class="t" style="font-size:13px;color:#e00000;font-family:IPAGothic,sans-serif;left:605.3px;margin-left:-13.00px;transform-origin:100% 50%;top:481.0px;line-height:18px;height:18px;">【</span><span id="t70" class="t" style="font-size:13px;color:#e00000;transform:scaleX(0.9430);left:606.5px;transform-origin:0 50%;top:481.3px;line-height:18px;height:18px;">x0.54</span><span id="t71" class="t" style="font-size:13px;color:#e00000;font-family:IPAGothic,sans-serif;left:636.8px;transform-origin:0 50%;top:481.0px;line-height:18px;height:18px;">】</span><div style="left:664px;top:186px;width:411px;height:314px;background:#000;border-left:1px solid #444;border-top:1px solid #3c3c3c;box-sizing:border-box"></div><div style="left:664px;top:499px;width:411px;height:1px;background:#444"></div><div style="left:1074px;top:186px;width:1px;height:314px;background:#3c3c3c"></div><svg style="left:666px;top:187px" width="405" height="312" viewBox="666 187 405 312"><defs><linearGradient id="sbg" x1="0" y1="1" x2="1" y2="0"><stop offset="0" stop-color="#494949"/><stop offset=".5" stop-color="#545454"/><stop offset="1" stop-color="#5b5b5b"/></linearGradient><radialGradient id="sv" cx=".52" cy=".48" r=".62"><stop offset="0" stop-color="#fff" stop-opacity=".045"/><stop offset=".5" stop-color="#fff" stop-opacity=".03"/><stop offset="1" stop-color="#fff" stop-opacity="0"/></radialGradient><radialGradient id="ss"><stop offset="0" stop-color="#fff"/><stop offset=".45" stop-color="#fff" stop-opacity=".95"/><stop offset="1" stop-color="#fff" stop-opacity="0"/></radialGradient><filter id="sb" x="-5%" y="-5%" width="110%" height="110%"><feGaussianBlur stdDeviation="0.4"/></filter></defs><rect x="666" y="187" width="405" height="312" fill="url(#sbg)"/><rect x="666" y="187" width="405" height="312" fill="url(#sv)"/><g fill="url(#ss)" filter="url(#sb)"><circle cx="705.1" cy="191.8" r="2.05"/><circle cx="716.1" cy="198.1" r="2.4"/><circle cx="681.3" cy="208.8" r="2.05"/><circle cx="692.9" cy="211.8" r="1.55" opacity="0.42"/><circle cx="714.2" cy="210.5" r="1.55" opacity="0.42"/><circle cx="784.9" cy="216.8" r="2.4"/><circle cx="770.9" cy="220.8" r="1.55" opacity="0.42"/><circle cx="831.3" cy="224.7" r="2.05"/><circle cx="818" cy="220.6" r="1.55" opacity="0.42"/><circle cx="838.2" cy="201.9" r="1.55" opacity="0.42"/><circle cx="780.2" cy="204.7" r="1.55" opacity="0.42"/><circle cx="847" cy="189" r="1.55" opacity="0.42"/><circle cx="703.6" cy="236.5" r="1.7" opacity="0.68"/><circle cx="693.7" cy="261" r="3.1"/><circle cx="666.4" cy="269.6" r="2.05"/><circle cx="694.4" cy="282.5" r="1.7" opacity="0.68"/><circle cx="718" cy="284.3" r="1.7" opacity="0.68"/><circle cx="776.3" cy="279.3" r="2.4"/><circle cx="815" cy="259.5" r="1.7" opacity="0.68"/><circle cx="846.4" cy="248.4" r="1.55" opacity="0.42"/><circle cx="842.5" cy="278.5" r="1.55" opacity="0.42"/><circle cx="779.7" cy="239.5" r="1.55" opacity="0.42"/><circle cx="747" cy="258.2" r="1.4" opacity="0.22"/><circle cx="744.7" cy="298.2" r="1.4" opacity="0.22"/><circle cx="791.8" cy="307.5" r="1.55" opacity="0.42"/><circle cx="779.5" cy="315.9" r="1.55" opacity="0.42"/><circle cx="764.5" cy="319.3" r="1.55" opacity="0.42"/><circle cx="820.1" cy="310.3" r="1.55" opacity="0.42"/><circle cx="789.4" cy="330.3" r="1.55" opacity="0.42"/><circle cx="834.8" cy="330.3" r="2.4"/><circle cx="671.4" cy="334.3" r="1.7" opacity="0.68"/><circle cx="705.1" cy="325.5" r="1.4" opacity="0.22"/><circle cx="708.8" cy="344.2" r="2.05"/><circle cx="702" cy="343.4" r="1.55" opacity="0.42"/><circle cx="814.3" cy="294.4" r="1.4" opacity="0.22"/><circle cx="837.6" cy="306.8" r="1.4" opacity="0.22"/><circle cx="884.1" cy="212" r="2.05"/><circle cx="914.7" cy="214.8" r="1.55" opacity="0.42"/><circle cx="939.6" cy="215.7" r="1.55" opacity="0.42"/><circle cx="904.1" cy="242.8" r="3.1"/><circle cx="972.9" cy="211.4" r="1.55" opacity="0.42"/><circle cx="1029.2" cy="221.5" r="2.05"/><circle cx="1042.1" cy="215.7" r="1.55" opacity="0.42"/><circle cx="1063.2" cy="228.8" r="1.55" opacity="0.42"/><circle cx="1052.7" cy="230.1" r="1.55" opacity="0.42"/><circle cx="977" cy="248.6" r="1.55" opacity="0.42"/><circle cx="945" cy="261.9" r="1.55" opacity="0.42"/><circle cx="970.8" cy="262.1" r="1.55" opacity="0.42"/><circle cx="967.8" cy="267.5" r="1.55" opacity="0.42"/><circle cx="1020.8" cy="266.4" r="1.55" opacity="0.42"/><circle cx="1038.5" cy="269.6" r="2.05"/><circle cx="1044.3" cy="266.2" r="1.55" opacity="0.42"/><circle cx="1059.8" cy="270.9" r="1.55" opacity="0.42"/><circle cx="938.3" cy="278.7" r="1.85" opacity="0.88"/><circle cx="911.4" cy="289.2" r="1.7" opacity="0.68"/><circle cx="957.4" cy="312.2" r="1.85" opacity="0.88"/><circle cx="994.2" cy="333.1" r="1.85" opacity="0.88"/><circle cx="1067.7" cy="295" r="2.4"/><circle cx="1057.2" cy="318" r="2.4"/><circle cx="972" cy="328.8" r="1.55" opacity="0.42"/><circle cx="1003.2" cy="337.4" r="1.55" opacity="0.42"/><circle cx="893.4" cy="315.4" r="1.55" opacity="0.42"/><circle cx="897.7" cy="340.8" r="1.55" opacity="0.42"/><circle cx="942.4" cy="333.3" r="1.4" opacity="0.22"/><circle cx="883" cy="285.3" r="1.4" opacity="0.22"/><circle cx="1009.5" cy="253.1" r="1.4" opacity="0.22"/><circle cx="939.8" cy="191.2" r="1.4" opacity="0.22"/><circle cx="1066.8" cy="331.1" r="1.55" opacity="0.42"/><circle cx="1023.6" cy="318.9" r="1.4" opacity="0.22"/><circle cx="967.3" cy="288.6" r="1.4" opacity="0.22"/><circle cx="1000.4" cy="325.7" r="1.4" opacity="0.22"/><circle cx="874.9" cy="225.8" r="1.4" opacity="0.22"/><circle cx="1013.1" cy="201.9" r="1.4" opacity="0.22"/><circle cx="1032.7" cy="201.9" r="1.4" opacity="0.22"/><circle cx="735.7" cy="345.4" r="1.7" opacity="0.68"/><circle cx="668.2" cy="348" r="1.7" opacity="0.68"/><circle cx="689.7" cy="359.6" r="1.55" opacity="0.42"/><circle cx="703" cy="364.9" r="1.55" opacity="0.42"/><circle cx="718.7" cy="366.9" r="1.55" opacity="0.42"/><circle cx="709.2" cy="371.8" r="1.4" opacity="0.22"/><circle cx="754.2" cy="358.9" r="1.4" opacity="0.22"/><circle cx="780.2" cy="366.9" r="4.4"/><circle cx="794.4" cy="361.5" r="1.55" opacity="0.42"/><circle cx="809.2" cy="373.5" r="1.55" opacity="0.42"/><circle cx="838.8" cy="358.1" r="1.55" opacity="0.42"/><circle cx="817.6" cy="361.9" r="1.4" opacity="0.22"/><circle cx="759.3" cy="383" r="1.4" opacity="0.22"/><circle cx="786.4" cy="403.8" r="1.7" opacity="0.68"/><circle cx="841" cy="410.5" r="1.85" opacity="0.88"/><circle cx="687.5" cy="410.1" r="1.7" opacity="0.68"/><circle cx="689.7" cy="420.8" r="1.55" opacity="0.42"/><circle cx="753.1" cy="423.2" r="1.85" opacity="0.88"/><circle cx="798.4" cy="426.6" r="3.1"/><circle cx="813.9" cy="421" r="1.55" opacity="0.42"/><circle cx="795.9" cy="432.9" r="1.55" opacity="0.42"/><circle cx="769.8" cy="431.6" r="1.55" opacity="0.42"/><circle cx="693.7" cy="437.6" r="1.7" opacity="0.68"/><circle cx="697.4" cy="441.5" r="1.4" opacity="0.22"/><circle cx="674.2" cy="453.5" r="1.85" opacity="0.88"/><circle cx="784.7" cy="451.1" r="1.55" opacity="0.42"/><circle cx="840.8" cy="444.7" r="1.55" opacity="0.42"/><circle cx="831.5" cy="448.3" r="1.4" opacity="0.22"/><circle cx="772" cy="467.5" r="1.7" opacity="0.68"/><circle cx="788.5" cy="470.7" r="2.05"/><circle cx="838.8" cy="469.4" r="1.7" opacity="0.68"/><circle cx="681.5" cy="480.4" r="1.55" opacity="0.42"/><circle cx="778.7" cy="487.9" r="1.55" opacity="0.42"/><circle cx="846.6" cy="491.1" r="2.4"/><circle cx="795.2" cy="496.5" r="1.55" opacity="0.42"/><circle cx="835.8" cy="496.3" r="1.55" opacity="0.42"/><circle cx="868.5" cy="413.5" r="1.55" opacity="0.42"/><circle cx="716.3" cy="464" r="1.4" opacity="0.22"/><circle cx="676.6" cy="468.1" r="1.4" opacity="0.22"/><circle cx="773.1" cy="453.3" r="1.4" opacity="0.22"/><circle cx="746" cy="461" r="1.4" opacity="0.22"/><circle cx="898.5" cy="359.8" r="1.85" opacity="0.88"/><circle cx="924.5" cy="363.2" r="1.7" opacity="0.68"/><circle cx="957.2" cy="363.6" r="2.4"/><circle cx="877.5" cy="350.3" r="1.7" opacity="0.68"/><circle cx="871" cy="372.9" r="1.55" opacity="0.42"/><circle cx="982.6" cy="374.8" r="1.55" opacity="0.42"/><circle cx="1046.6" cy="375.9" r="1.55" opacity="0.42"/><circle cx="982.2" cy="390.5" r="1.7" opacity="0.68"/><circle cx="1020.4" cy="391.6" r="1.55" opacity="0.42"/><circle cx="1004.3" cy="390.3" r="1.4" opacity="0.22"/><circle cx="915.7" cy="392" r="1.4" opacity="0.22"/><circle cx="959.2" cy="402.8" r="1.55" opacity="0.42"/><circle cx="964.7" cy="413.1" r="2.7"/><circle cx="1043.6" cy="414.2" r="2.4"/><circle cx="951.8" cy="418.9" r="1.4" opacity="0.22"/><circle cx="922.6" cy="415.7" r="1.4" opacity="0.22"/><circle cx="901.3" cy="426.2" r="1.55" opacity="0.42"/><circle cx="948.6" cy="430.9" r="1.55" opacity="0.42"/><circle cx="890.6" cy="440.4" r="1.7" opacity="0.68"/><circle cx="918.1" cy="444.7" r="1.85" opacity="0.88"/><circle cx="1038.9" cy="442.3" r="2.05"/><circle cx="1000.9" cy="449.6" r="1.55" opacity="0.42"/><circle cx="981.3" cy="458.4" r="1.4" opacity="0.22"/><circle cx="928.4" cy="472.6" r="2.05"/><circle cx="984.5" cy="472.2" r="1.4" opacity="0.22"/><circle cx="1012.7" cy="475" r="1.4" opacity="0.22"/><circle cx="994.6" cy="484.7" r="1.55" opacity="0.42"/><circle cx="966.7" cy="489" r="1.7" opacity="0.68"/><circle cx="1038.3" cy="491.1" r="2.4"/><circle cx="1006.4" cy="493.1" r="1.55" opacity="0.42"/><circle cx="912.1" cy="488.8" r="1.55" opacity="0.42"/><circle cx="930.1" cy="493.1" r="1.4" opacity="0.22"/><circle cx="903.9" cy="493.5" r="1.4" opacity="0.22"/><circle cx="884.6" cy="461.7" r="1.4" opacity="0.22"/><circle cx="1002.6" cy="469.6" r="1.4" opacity="0.22"/><circle cx="953.4" cy="456.7" r="1.4" opacity="0.22"/><circle cx="1058" cy="398.7" r="1.4" opacity="0.22"/></g><g fill="none" stroke="#ee0000" stroke-width="1"><circle cx="911.4" cy="289.2" r="4.9"/><circle cx="957.4" cy="312.2" r="4.9"/><circle cx="994.2" cy="333.1" r="4.9"/><circle cx="834.8" cy="330.3" r="4.9"/><circle cx="780.2" cy="366.9" r="4.9"/><circle cx="809.2" cy="373.5" r="4.9"/><circle cx="898.5" cy="359.8" r="4.9"/><circle cx="924.5" cy="363.2" r="4.9"/><circle cx="957.2" cy="363.6" r="4.9"/><circle cx="841" cy="410.5" r="4.9"/></g></svg><span id="t72" class="t" style="font-size:12px;color:#808080;transform:scaleX(0.8133);left:146px;transform-origin:0 50%;top:509.0px;line-height:16px;height:16px;">ゲイン:</span><div style="left:165px;top:536px;width:125px;height:1px;background:#454545"></div><div style="left:165px;top:537px;width:125px;height:1px;background:#2c2c2c"></div><div style="left:165px;top:538px;width:125px;height:1px;background:#6c6c6c"></div><div style="left:289px;top:536px;width:1px;height:3px;background:#6c6c6c"></div><div style="left:154px;top:529px;width:9px;height:19px;border:1px solid #000;background:#242424;box-shadow:inset 0 0 0 1px #686868"></div><span id="t73" class="t" style="font-size:12px;color:#d6d6d6;transform:scaleX(0.9491);left:303.5px;transform-origin:0 50%;top:509.0px;line-height:16px;height:16px;">露出[秒]: 0.01</span><div style="left:312px;top:536px;width:135px;height:1px;background:#454545"></div><div style="left:312px;top:537px;width:135px;height:1px;background:#2c2c2c"></div><div style="left:312px;top:538px;width:135px;height:1px;background:#6c6c6c"></div><div style="left:446px;top:536px;width:1px;height:3px;background:#6c6c6c"></div><div style="left:347px;top:529px;width:9px;height:19px;border:1px solid #000;background:#242424;box-shadow:inset 0 0 0 1px #686868"></div><div style="left:460px;top:506px;width:58px;height:46px;border:1px solid #000;background:#1a1a1a"></div><span id="t74" class="t" style="font-size:12px;color:#d6d6d6;transform:scaleX(0.9375);left:489.2px;margin-left:-24.00px;transform-origin:50% 50%;top:516.75px;line-height:16px;height:16px;">REF画像</span><span id="t75" class="t" style="font-size:12px;color:#d6d6d6;transform:scaleX(1.0000);left:489.2px;margin-left:-12.00px;transform-origin:50% 50%;top:528.25px;line-height:16px;height:16px;">取得</span><div style="left:525px;top:506px;width:58px;height:46px;border:1px solid #000;background:#1a1a1a"></div><span id="t76" class="t" style="font-size:12px;color:#d6d6d6;transform:scaleX(0.7500);left:554.2px;margin-left:-18.00px;transform-origin:50% 50%;top:516.75px;line-height:16px;height:16px;">ダーク</span><span id="t77" class="t" style="font-size:12px;color:#d6d6d6;transform:scaleX(1.0000);left:554.2px;margin-left:-12.00px;transform-origin:50% 50%;top:528.25px;line-height:16px;height:16px;">取得</span><div style="left:590px;top:506px;width:58px;height:46px;border:1px solid #000;background:#2e2e2e"></div><span id="t78" class="t" style="font-size:12px;color:#6e6e6e;transform:scaleX(0.7500);left:619.2px;margin-left:-18.00px;transform-origin:50% 50%;top:516.75px;line-height:16px;height:16px;">ダーク</span><span id="t79" class="t" style="font-size:12px;color:#6e6e6e;transform:scaleX(0.7500);left:619.2px;margin-left:-18.00px;transform-origin:50% 50%;top:528.25px;line-height:16px;height:16px;">クリア</span><div style="left:1017px;top:506px;width:58px;height:46px;border:1px solid #000;background:#1a1a1a"></div><span id="t80" class="t" style="font-size:12px;color:#d6d6d6;transform:scaleX(0.6875);left:1046.2px;margin-left:-24.00px;transform-origin:50% 50%;top:521.75px;line-height:16px;height:16px;">リセット</span><div style="left:17px;top:565px;width:418px;height:1px;background:#848d9a"></div><div style="left:467px;top:565px;width:417px;height:1px;background:#848d9a"></div><span id="t81" class="t" style="font-size:12px;color:#d6d6d6;transform:scaleX(0.7222);left:451px;margin-left:-18.00px;transform-origin:50% 50%;top:557.5px;line-height:16px;height:16px;">グラフ</span><div style="left:897px;top:565px;width:62px;height:1px;background:#848d9a"></div><div style="left:1013px;top:565px;width:63px;height:1px;background:#848d9a"></div><span id="t82" class="t" style="font-size:12px;color:#d6d6d6;transform:scaleX(1.0000);left:986px;margin-left:-24.00px;transform-origin:50% 50%;top:557.5px;line-height:16px;height:16px;">手動微動</span><svg style="left:19px;top:577px" width="781" height="97" viewBox="19 577 781 97"><rect x="19.5" y="577.5" width="779" height="96" fill="#000" stroke="#3c3c3c"/><path d="M20 578.5 H798 M20 672.5 H798" stroke="#4c4c4c" stroke-dasharray="3 3"/><path d="M36.5 578 V673" stroke="#585858" stroke-dasharray="3 3" stroke-width="1"/><path d="M115.0 578 V673" stroke="#585858" stroke-dasharray="3 3" stroke-width="1"/><path d="M193.4 578 V673" stroke="#585858" stroke-dasharray="3 3" stroke-width="1"/><path d="M271.9 578 V673" stroke="#585858" stroke-dasharray="3 3" stroke-width="1"/><path d="M350.3 578 V673" stroke="#585858" stroke-dasharray="3 3" stroke-width="1"/><path d="M428.8 578 V673" stroke="#585858" stroke-dasharray="3 3" stroke-width="1"/><path d="M507.2 578 V673" stroke="#585858" stroke-dasharray="3 3" stroke-width="1"/><path d="M585.6 578 V673" stroke="#585858" stroke-dasharray="3 3" stroke-width="1"/><path d="M664.1 578 V673" stroke="#585858" stroke-dasharray="3 3" stroke-width="1"/><path d="M742.6 578 V673" stroke="#585858" stroke-dasharray="3 3" stroke-width="1"/><path d="M20 602.5 H798 M20 648.5 H798" stroke="#6b6000" stroke-width="1"/><path d="M20 625.5 H798" stroke="#b0b0b0" stroke-width="1"/><rect x="82.9" y="626" width="2" height="14.2" fill="#ff9ea8"/><rect x="139.9" y="626" width="2" height="10.2" fill="#9cf59c"/><rect x="147.9" y="626" width="2" height="9.0" fill="#9cf59c"/><rect x="162.9" y="626" width="2" height="9.0" fill="#9cf59c"/><rect x="178.9" y="626" width="2" height="10.2" fill="#9cf59c"/><rect x="215.8" y="626" width="2" height="12.2" fill="#ff9ea8"/><rect x="264.8" y="626" width="2" height="10.2" fill="#9cf59c"/><rect x="312.0" y="626" width="2" height="10.2" fill="#9cf59c"/><rect x="356.9" y="626" width="2" height="12.2" fill="#ff9ea8"/><rect x="390.9" y="626" width="2" height="10.2" fill="#9cf59c"/><rect x="396.9" y="626" width="2" height="13.2" fill="#ff9ea8"/><rect x="468.9" y="626" width="2" height="10.2" fill="#9cf59c"/><rect x="484.8" y="626" width="2" height="11.2" fill="#9cf59c"/><polyline points="21.4,613.6 36.0,611.0 42.0,610.0 62.0,609.0 67.0,607.0 74.0,612.0 83.9,614.0 91.9,620.4 97.9,619.4 105.9,614.4 113.9,608.4 121.9,606.4 129.9,605.0 137.9,603.0 145.9,621.0 152.9,621.4 161.3,605.4 168.9,619.4 176.9,600.0 181.9,612.0 185.5,615.0 193.9,612.6 201.9,611.4 209.9,611.6 217.8,613.0 224.8,624.4 231.8,613.0 239.8,612.0 247.8,608.4 254.8,606.6 262.8,605.4 271.4,617.4 278.0,607.0 287.0,606.0 296.0,606.6 303.0,605.0 311.0,602.0 319.0,613.4 324.0,606.0 335.0,604.0 342.9,608.0 357.9,606.0 365.5,620.0 372.9,610.0 380.9,606.0 388.9,603.0 397.9,610.0 405.9,619.0 412.9,612.0 420.9,608.4 428.9,608.4 436.9,605.0 444.9,605.6 452.9,606.4 459.9,604.0 467.9,603.0 475.8,614.4 483.4,598.0 490.8,617.0 499.8,623.6 507.8,628.0 515.8,628.0 523.8,626.0 529.8,631.0 537.8,626.0 546.4,623.6 554.6,623.0 562.0,620.0 569.4,616.4 577.6,618.6 585.0,617.4 593.4,614.4 601.4,617.0 608.9,615.6 616.9,615.6 624.9,617.0 632.3,615.0 640.3,615.6 647.9,613.0 655.9,610.6 664.5,611.0 671.9,609.6 678.9,609.0 687.9,611.0 695.9,610.0 710.9,611.0 718.9,610.0 726.9,610.6 734.9,610.0 742.4,607.6 750.8,610.6 758.8,612.4 765.8,610.6 773.8,613.6 781.8,612.0 789.2,610.0 798.0,610.6" fill="none" stroke="#009000" stroke-width="1" shape-rendering="crispEdges"/><polyline points="21.4,619.4 36.0,618.6 44.0,619.4 51.0,615.4 60.0,615.4 68.0,617.4 75.6,622.4 78.0,615.0 83.5,595.0 89.9,627.0 91.9,628.6 105.9,628.6 113.9,630.0 129.9,629.4 137.9,628.6 145.9,618.6 153.9,618.6 161.9,625.0 168.9,617.4 177.9,622.0 184.9,611.0 192.9,612.0 200.9,611.4 207.9,607.4 216.8,605.4 224.8,625.0 231.8,606.0 239.8,605.6 247.8,609.0 254.8,611.0 263.8,616.0 271.4,612.4 278.0,620.0 287.0,620.0 296.0,618.6 303.0,616.4 311.0,614.0 319.0,606.0 327.0,612.6 334.6,616.4 342.3,612.6 349.9,612.0 357.5,609.0 365.5,628.4 372.9,612.0 380.9,607.0 388.9,605.4 396.9,600.0 405.9,629.0 411.9,625.0 420.9,625.0 428.9,624.0 444.9,622.0 452.9,618.0 459.9,617.0 467.9,616.0 475.8,609.0 483.4,616.4 490.8,611.6 499.8,613.0 507.4,616.4 515.8,623.0 523.8,628.0 529.8,623.0 537.8,625.0 546.4,629.6 554.6,626.4 562.0,625.4 569.4,628.6 585.0,628.4 593.4,629.6 601.4,628.0 608.9,629.6 616.9,629.0 624.9,628.0 632.3,627.4 640.3,628.4 647.9,630.4 655.9,632.6 664.5,633.6 671.9,631.0 678.9,628.4 687.9,626.6 695.9,624.0 702.9,622.4 710.9,621.0 719.9,620.0 726.9,622.0 734.9,621.0 742.4,620.0 750.8,617.0 758.8,618.0 765.8,616.0 773.8,617.0 781.8,618.6 789.2,621.6 798.0,621.6" fill="none" stroke="#980000" stroke-width="1" shape-rendering="crispEdges"/><polyline points="21.4,613.2 27.0,611.6 36.0,608.6 40.0,608.6 42.0,609.4 50.0,609.2 61.0,609.0 67.0,606.4 75.6,622.4 90.9,607.2 97.9,611.4 105.9,608.4 113.9,605.6 121.9,602.4 129.9,604.6 137.9,600.6 145.9,601.6 152.9,598.4 159.9,601.0 168.9,603.0 176.9,599.6 185.5,616.0 193.9,612.4 201.9,611.4 209.9,612.0 217.8,616.4 224.8,612.0 231.8,608.0 239.8,608.4 247.8,607.2 254.8,606.0 263.8,600.6 269.8,601.2 278.0,606.4 287.0,604.4 296.0,606.0 303.0,604.0 311.0,600.4 319.0,604.4 328.0,604.0 335.0,603.6 342.9,607.0 349.9,605.0 357.9,605.6 365.9,607.0 372.9,605.4 380.9,603.0 388.9,600.0 397.9,609.0 405.9,610.6 412.9,607.6 420.9,604.4 428.9,607.6 436.9,603.6 444.9,605.6 452.9,606.0 459.9,602.4 467.9,600.6 475.8,604.4 483.4,597.6 490.8,628.0 499.8,628.0 507.8,629.6 515.8,627.0 523.8,628.0 529.8,632.4 537.8,625.0 539.0,622.4 546.4,612.4 554.6,622.4 562.0,620.0 569.4,609.6 577.6,621.4 585.0,618.0 593.4,607.4 601.4,619.6 608.9,616.0 616.9,618.0 624.9,616.0 632.3,612.4 640.3,616.0 647.9,608.0 655.9,604.4 664.5,613.0 671.9,609.6 678.9,608.4 687.9,612.0 695.9,609.6 702.9,611.0 710.9,612.0 718.9,606.6 726.9,612.0 734.9,609.4 742.4,605.0 750.8,613.6 758.8,611.4 765.8,611.4 773.8,614.0 781.8,609.0 789.2,605.6 798.0,610.4" fill="none" stroke="#00d800" stroke-width="1" shape-rendering="crispEdges"/><polyline points="21.4,619.4 28.0,618.2 36.0,617.6 44.0,620.0 51.0,616.4 60.0,616.4 68.0,619.0 75.6,623.0 83.5,592.4 91.9,634.4 97.9,633.0 105.9,629.4 113.9,631.0 121.9,630.0 129.9,628.6 137.9,629.0 146.9,635.4 153.9,627.4 161.9,618.6 168.9,621.4 176.9,619.4 184.9,610.6 192.9,612.4 200.9,610.0 207.9,600.6 216.8,600.6 224.8,604.4 231.8,607.4 239.8,608.0 247.8,611.4 254.8,615.6 265.8,629.0 271.8,623.0 278.0,619.0 287.0,621.0 296.0,615.0 303.0,609.6 311.0,611.4 319.0,611.4 327.0,612.6 334.6,622.4 342.3,608.4 349.9,606.0 357.5,598.6 365.5,606.0 372.9,612.6 380.9,604.4 388.9,602.6 396.9,599.6 405.9,618.0 411.9,626.0 420.9,626.0 428.9,623.0 436.9,620.0 444.9,618.0 452.9,612.6 459.9,615.0 467.9,618.0 475.8,612.6 483.4,617.0 490.8,618.6 499.8,623.0 507.4,617.4 515.8,627.0 522.8,636.0 529.8,624.0 537.8,623.6 539.0,625.0 546.4,632.4 554.6,626.0 562.0,624.0 569.4,629.4 577.6,628.0 585.0,628.0 593.4,630.4 601.4,627.6 608.9,630.4 616.9,629.4 624.9,627.4 632.3,623.4 640.3,633.0 647.9,635.0 655.9,637.6 664.5,628.0 671.9,626.0 678.9,623.6 687.9,630.4 695.9,617.4 702.9,619.0 710.9,619.0 719.9,625.4 726.9,623.0 734.9,620.6 742.4,613.0 750.8,618.0 758.8,617.4 765.8,615.0 773.8,619.6 781.8,623.0 789.2,629.4 798.0,618.0" fill="none" stroke="#f00000" stroke-width="1" shape-rendering="crispEdges"/></svg><span id="t83" class="t" style="font-size:12px;color:#d6d6d6;transform:scaleX(0.9072);left:806px;transform-origin:0 50%;top:572.75px;line-height:16px;height:16px;">+1.0px</span><span id="t84" class="t" style="font-size:12px;color:#d6d6d6;transform:scaleX(0.9892);left:806px;transform-origin:0 50%;top:660.25px;line-height:16px;height:16px;">-1.0px</span><div style="left:806px;top:600px;width:77px;height:46px;border:1px solid #000;background:#1a1a1a"></div><span id="t85" class="t" style="font-size:12px;color:#d6d6d6;transform:scaleX(0.8333);left:844.7px;margin-left:-30.00px;transform-origin:50% 50%;top:610.75px;line-height:16px;height:16px;">縦スケール</span><span id="t86" class="t" style="font-size:12px;color:#d6d6d6;transform:scaleX(1.1250);left:844.7px;margin-left:-16.00px;transform-origin:50% 50%;top:622.25px;line-height:16px;height:16px;">(自動)</span><div style="left:897px;top:600px;width:56px;height:48px;border:1px solid #000;background:#2e2e2e"></div><span id="t87" class="t" style="font-size:12px;color:#6e6e6e;left:925.2px;margin-left:-4.01px;transform-origin:50% 50%;top:616.75px;line-height:16px;height:16px;">E</span><div style="left:958px;top:575px;width:56px;height:48px;border:1px solid #000;background:#2e2e2e"></div><span id="t88" class="t" style="font-size:12px;color:#6e6e6e;left:986.2px;margin-left:-4.34px;transform-origin:50% 50%;top:591.75px;line-height:16px;height:16px;">N</span><div style="left:958px;top:627px;width:56px;height:47px;border:1px solid #000;background:#2e2e2e"></div><span id="t89" class="t" style="font-size:12px;color:#6e6e6e;left:986.2px;margin-left:-4.01px;transform-origin:50% 50%;top:642.75px;line-height:16px;height:16px;">S</span><div style="left:1019px;top:600px;width:56px;height:48px;border:1px solid #000;background:#2e2e2e"></div><span id="t90" class="t" style="font-size:12px;color:#6e6e6e;left:1047.2px;margin-left:-5.66px;transform-origin:50% 50%;top:616.75px;line-height:16px;height:16px;">W</span><div style="left:13px;top:681px;width:117px;height:46px;border:1px solid #000;background:#1a1a1a"></div><svg style="left:17px;top:683.5px" width="12" height="11" viewBox="0 0 12 11"><polygon points="0.3,0.3 10.6,4.6 0.3,9.9" fill="#b80000"/><polygon points="0.3,0.3 10.6,4.6 7,4.4 0.3,1.9" fill="#e07878"/></svg><span id="t91" class="t" style="font-size:12px;color:#d6d6d6;transform:scaleX(0.8167);left:71.7px;margin-left:-30.00px;transform-origin:50% 50%;top:696.75px;line-height:16px;height:16px;">モニタ開始</span><div style="left:138px;top:681px;width:117px;height:46px;border:1px solid #000;background:#1a1a1a"></div><svg style="left:142px;top:683.5px" width="12" height="11" viewBox="0 0 12 11"><polygon points="0.3,0.3 10.6,4.6 0.3,9.9" fill="#b80000"/><polygon points="0.3,0.3 10.6,4.6 7,4.4 0.3,1.9" fill="#e07878"/></svg><span id="t92" class="t" style="font-size:12px;color:#d6d6d6;transform:scaleX(0.8333);left:196.7px;margin-left:-24.00px;transform-origin:50% 50%;top:696.75px;line-height:16px;height:16px;">ガイド中</span><span id="t93" class="t" style="font-size:12px;color:#d6d6d6;transform:scaleX(0.8419);left:261.5px;transform-origin:0 50%;top:683.0px;line-height:16px;height:16px;">インターバル[秒]: 1.0</span><div style="left:270px;top:711px;width:93px;height:1px;background:#454545"></div><div style="left:270px;top:712px;width:93px;height:1px;background:#2c2c2c"></div><div style="left:270px;top:713px;width:93px;height:1px;background:#6c6c6c"></div><div style="left:362px;top:711px;width:1px;height:3px;background:#6c6c6c"></div><div style="left:274px;top:704px;width:9px;height:19px;border:1px solid #000;background:#242424;box-shadow:inset 0 0 0 1px #686868"></div><span id="t94" class="t" style="font-size:12px;color:#d6d6d6;transform:scaleX(0.8398);left:376px;transform-origin:0 50%;top:683.0px;line-height:16px;height:16px;">赤経アグレッシブ[%]: 70</span><div style="left:384px;top:711px;width:238px;height:1px;background:#454545"></div><div style="left:384px;top:712px;width:238px;height:1px;background:#2c2c2c"></div><div style="left:384px;top:713px;width:238px;height:1px;background:#6c6c6c"></div><div style="left:621px;top:711px;width:1px;height:3px;background:#6c6c6c"></div><div style="left:543px;top:704px;width:9px;height:19px;border:1px solid #000;background:#242424;box-shadow:inset 0 0 0 1px #686868"></div><span id="t95" class="t" style="font-size:12px;color:#d6d6d6;transform:scaleX(0.8398);left:634.5px;transform-origin:0 50%;top:683.0px;line-height:16px;height:16px;">赤緯アグレッシブ[%]: 70</span><div style="left:642px;top:711px;width:238px;height:1px;background:#454545"></div><div style="left:642px;top:712px;width:238px;height:1px;background:#2c2c2c"></div><div style="left:642px;top:713px;width:238px;height:1px;background:#6c6c6c"></div><div style="left:879px;top:711px;width:1px;height:3px;background:#6c6c6c"></div><div style="left:801px;top:704px;width:9px;height:19px;border:1px solid #000;background:#242424;box-shadow:inset 0 0 0 1px #686868"></div><div style="left:893px;top:681px;width:117px;height:46px;border:1px solid #000;background:#1a1a1a"></div><svg style="left:897px;top:683.5px" width="12" height="11" viewBox="0 0 12 11"><polygon points="0.3,0.3 10.6,4.6 0.3,9.9" fill="#b80000"/><polygon points="0.3,0.3 10.6,4.6 7,4.4 0.3,1.9" fill="#e07878"/></svg><span id="t96" class="t" style="font-size:12px;color:#d6d6d6;transform:scaleX(0.7222);left:951.7px;margin-left:-54.00px;transform-origin:50% 50%;top:696.75px;line-height:16px;height:16px;">キャリブレーション</span><div style="left:1017px;top:681px;width:61px;height:46px;border:1px solid #000;background:#1a1a1a"></div><div style="left:1020px;top:684px;width:14px;height:2px;background:#606060"></div><div style="left:1020px;top:688px;width:14px;height:2px;background:#606060"></div><span id="t97" class="t" style="font-size:12px;color:#d6d6d6;transform:scaleX(1.0000);left:1047.7px;margin-left:-12.00px;transform-origin:50% 50%;top:696.75px;line-height:16px;height:16px;">設定</span><div style="left:13px;top:734px;width:836px;height:21px;border:1px solid #000;box-sizing:border-box"></div><span id="t98" class="t" style="font-size:12px;color:#d6d6d6;transform:scaleX(0.9833);left:14.5px;transform-origin:0 50%;top:736.0px;line-height:16px;height:16px;">撮影待機中</span><span id="t99" class="t" style="font-size:12px;color:#d6d6d6;transform:scaleX(1.0167);left:856px;transform-origin:0 50%;top:736.0px;line-height:16px;height:16px;">望遠鏡:</span><div style="left:905px;top:734px;width:175px;height:21px;border:1px solid #000;box-sizing:border-box"></div><span id="t100" class="t" style="font-size:12px;color:#d6d6d6;transform:scaleX(1.0184);left:906.3px;transform-origin:0 50%;top:736.0px;line-height:16px;height:16px;">接続中 望遠鏡位置:西側</span><div style="left:1094px;top:169px;width:83px;height:1px;background:#848d9a"></div><div style="left:1265px;top:169px;width:84px;height:1px;background:#848d9a"></div><span id="t101" class="t" style="font-size:12px;color:#d6d6d6;transform:scaleX(1.0250);left:1221px;margin-left:-40.00px;transform-origin:50% 50%;top:161.5px;line-height:16px;height:16px;">望遠鏡(赤道儀)</span><div style="left:1094px;top:179px;width:58px;height:46px;border:1px solid #000;background:linear-gradient(#3d3939 50%,#363232 50%)"></div><svg style="left:1098px;top:183px" width="12" height="4"><rect width="12" height="4" fill="#b40000"/><polygon points="0,0 12,0 10.6,1.4 1.4,1.4" fill="#e8a4a4"/><rect y="3.2" width="12" height=".8" fill="#8e0000"/></svg><span id="t102" class="t" style="font-size:12px;color:#d6d6d6;transform:scaleX(1.0000);left:1123.2px;margin-left:-18.00px;transform-origin:50% 50%;top:194.75px;line-height:16px;height:16px;">接続中</span><div style="left:1159px;top:179px;width:58px;height:46px;border:1px solid #000;background:#1a1a1a"></div><div style="left:1162px;top:182px;width:14px;height:2px;background:#606060"></div><div style="left:1162px;top:186px;width:14px;height:2px;background:#606060"></div><span id="t103" class="t" style="font-size:12px;color:#d6d6d6;transform:scaleX(1.0000);left:1188.2px;margin-left:-12.00px;transform-origin:50% 50%;top:194.75px;line-height:16px;height:16px;">設定</span><div style="left:1223px;top:179px;width:58px;height:46px;border:1px solid #000;background:#1a1a1a"></div><span id="t104" class="t" style="font-size:12px;color:#d6d6d6;transform:scaleX(1.0000);left:1252.2px;margin-left:-12.00px;transform-origin:50% 50%;top:194.75px;line-height:16px;height:16px;">日時</span><div style="left:1288px;top:179px;width:58px;height:46px;border:1px solid #000;background:#2e2e2e"></div><div style="left:1291px;top:182px;width:14px;height:2px;background:#3c3c3c"></div><div style="left:1291px;top:186px;width:14px;height:2px;background:#3c3c3c"></div><span id="t105" class="t" style="font-size:12px;color:#6e6e6e;transform:scaleX(1.0000);left:1317.2px;margin-left:-12.00px;transform-origin:50% 50%;top:194.75px;line-height:16px;height:16px;">選択</span><div style="left:1094px;top:231px;width:254px;height:21px;border:1px solid #000;box-sizing:border-box"></div><span id="t106" class="t" style="font-size:12px;color:#d6d6d6;transform:scaleX(0.7396);left:1152.6px;transform-origin:0 50%;top:233.5px;line-height:16px;height:16px;">タカハシ</span><span id="t107" class="t" style="font-size:12px;color:#d6d6d6;transform:scaleX(0.9263);left:1194px;transform-origin:0 50%;top:233.5px;line-height:16px;height:16px;">Temma2M (COM3)</span><div style="left:1094px;top:267px;width:90px;height:1px;background:#848d9a"></div><div style="left:1258px;top:267px;width:91px;height:1px;background:#848d9a"></div><span id="t108" class="t" style="font-size:12px;color:#d6d6d6;transform:scaleX(0.8569);left:1221px;margin-left:-39.68px;transform-origin:50% 50%;top:259.5px;line-height:16px;height:16px;">カメラ(D7100)</span><div style="left:1094px;top:277px;width:58px;height:46px;border:1px solid #000;background:linear-gradient(#3d3939 50%,#363232 50%)"></div><svg style="left:1098px;top:281px" width="12" height="4"><rect width="12" height="4" fill="#b40000"/><polygon points="0,0 12,0 10.6,1.4 1.4,1.4" fill="#e8a4a4"/><rect y="3.2" width="12" height=".8" fill="#8e0000"/></svg><span id="t109" class="t" style="font-size:12px;color:#d6d6d6;transform:scaleX(1.0000);left:1123.2px;margin-left:-18.00px;transform-origin:50% 50%;top:292.75px;line-height:16px;height:16px;">接続中</span><div style="left:1159px;top:277px;width:58px;height:46px;border:1px solid #000;background:#1a1a1a"></div><div style="left:1162px;top:280px;width:14px;height:2px;background:#606060"></div><div style="left:1162px;top:284px;width:14px;height:2px;background:#606060"></div><span id="t110" class="t" style="font-size:12px;color:#d6d6d6;transform:scaleX(1.0000);left:1188.2px;margin-left:-12.00px;transform-origin:50% 50%;top:292.75px;line-height:16px;height:16px;">日時</span><div style="left:1225px;top:278px;width:123px;height:25px;border:1px solid #000;box-sizing:border-box;background:#242424;box-shadow:inset 0 0 0 1px #585858"></div><div style="left:1324px;top:281px;width:21px;height:19px;border:1px solid #0c0c0c;box-sizing:border-box;background:linear-gradient(#1f1f1f 50%,#171717 50%)"></div><svg style="left:1331px;top:289px" width="7" height="4"><polygon points="0,0 7,0 3.5,3.8" fill="#5c5c5c"/></svg><span id="t111" class="t" style="font-size:12px;color:#6c6c6c;transform:scaleX(0.9124);left:1228.5px;transform-origin:0 50%;top:282.0px;line-height:16px;height:16px;">Nikon</span><div style="left:1094px;top:338px;width:97px;height:1px;background:#848d9a"></div><div style="left:1253px;top:338px;width:96px;height:1px;background:#848d9a"></div><span id="t112" class="t" style="font-size:12px;color:#d6d6d6;transform:scaleX(0.8841);left:1222px;margin-left:-31.67px;transform-origin:50% 50%;top:330.5px;line-height:16px;height:16px;">レンズ/鏡筒</span><span id="t113" class="t" style="font-size:12px;color:#d6d6d6;transform:scaleX(1.0128);left:1094px;transform-origin:0 50%;top:353.0px;line-height:16px;height:16px;">焦点距離:</span><div style="left:1164px;top:349px;width:79px;height:24px;border:1px solid #8a8a8a;box-sizing:border-box;background:#000;box-shadow:inset 0 0 0 1px #2a2a2a"></div><span id="t114" class="t" style="font-size:12px;color:#d6d6d6;transform:scaleX(0.8487);left:1168.5px;transform-origin:0 50%;top:350.0px;line-height:16px;height:16px;">800</span><span id="t115" class="t" style="font-size:12px;color:#d6d6d6;transform:scaleX(0.8500);left:1248.5px;transform-origin:0 50%;top:354.0px;line-height:16px;height:16px;">mm</span><div style="left:1276px;top:349px;width:68px;height:22px;border:1px solid #000;background:#1a1a1a"></div><svg style="left:1304.0px;top:352.0px" width="16" height="16" viewBox="0 0 16 16"><rect x=".75" y=".75" width="14.5" height="14.5" rx="2.6" fill="none" stroke="#d2d2d2" stroke-width="1.5"/><rect x="3.4" y="3.4" width="9.2" height="9.2" fill="#c6c6c6"/><rect x="6.1" y="5.1" width="3.8" height="5.8" fill="none" stroke="#1c1c1c" stroke-width="1.2"/></svg><span id="t116" class="t" style="font-size:12px;color:#d6d6d6;transform:scaleX(0.9874);left:1094px;transform-origin:0 50%;top:380.0px;line-height:16px;height:16px;">画角:</span><div style="left:1164px;top:378px;width:182px;height:21px;border:1px solid #000;box-sizing:border-box"></div><span id="t117" class="t" style="font-size:12px;color:#d6d6d6;transform:scaleX(0.9771);left:1167px;transform-origin:0 50%;top:380.0px;line-height:16px;height:16px;">1.68 × 1.12 度</span><div style="left:1094px;top:416px;width:46px;height:1px;background:#848d9a"></div><div style="left:1304px;top:416px;width:45px;height:1px;background:#848d9a"></div><span id="t118" class="t" style="font-size:12px;color:#d6d6d6;left:1222px;margin-left:-0.00px;transform-origin:50% 50%;top:408.5px;line-height:16px;height:16px;"></span><span id="t119" class="t" style="font-size:12px;color:#d6d6d6;transform:scaleX(0.7500);left:1143px;transform-origin:0 50%;top:408.5px;line-height:16px;height:16px;">オートガイド</span><span id="t120" class="t" style="font-size:12px;color:#d6d6d6;transform:scaleX(0.9672);left:1197px;transform-origin:0 50%;top:408.5px;line-height:16px;height:16px;">(StarlightXpress H9)</span><div style="left:1094px;top:426px;width:58px;height:46px;border:1px solid #000;background:linear-gradient(#3d3939 50%,#363232 50%)"></div><svg style="left:1098px;top:430px" width="12" height="4"><rect width="12" height="4" fill="#b40000"/><polygon points="0,0 12,0 10.6,1.4 1.4,1.4" fill="#e8a4a4"/><rect y="3.2" width="12" height=".8" fill="#8e0000"/></svg><span id="t121" class="t" style="font-size:12px;color:#d6d6d6;transform:scaleX(1.0000);left:1123.2px;margin-left:-18.00px;transform-origin:50% 50%;top:441.75px;line-height:16px;height:16px;">接続中</span><div style="left:1160px;top:427px;width:187px;height:25px;border:1px solid #000;box-sizing:border-box;background:#242424;box-shadow:inset 0 0 0 1px #585858"></div><div style="left:1323px;top:430px;width:21px;height:19px;border:1px solid #0c0c0c;box-sizing:border-box;background:linear-gradient(#1f1f1f 50%,#171717 50%)"></div><svg style="left:1330px;top:438px" width="7" height="4"><polygon points="0,0 7,0 3.5,3.8" fill="#5c5c5c"/></svg><span id="t122" class="t" style="font-size:12px;color:#6c6c6c;transform:scaleX(0.9585);left:1163.5px;transform-origin:0 50%;top:431.0px;line-height:16px;height:16px;">StarlightXpress</span><span id="t123" class="t" style="font-size:12px;color:#d6d6d6;transform:scaleX(1.0128);left:1160px;transform-origin:0 50%;top:460.5px;line-height:16px;height:16px;">焦点距離:</span><div style="left:1223px;top:457px;width:60px;height:23px;border:1px solid #8a8a8a;box-sizing:border-box;background:#000;box-shadow:inset 0 0 0 1px #2a2a2a"></div><span id="t124" class="t" style="font-size:12px;color:#d6d6d6;transform:scaleX(0.8487);left:1227.5px;transform-origin:0 50%;top:457.0px;line-height:16px;height:16px;">200</span><span id="t125" class="t" style="font-size:12px;color:#d6d6d6;transform:scaleX(0.8500);left:1290.5px;transform-origin:0 50%;top:461.0px;line-height:16px;height:16px;">mm</span><div style="left:1318px;top:456px;width:26px;height:22px;border:1px solid #000;background:#1a1a1a"></div><svg style="left:1325.0px;top:459.0px" width="16" height="16" viewBox="0 0 16 16"><rect x=".75" y=".75" width="14.5" height="14.5" rx="2.6" fill="none" stroke="#d2d2d2" stroke-width="1.5"/><rect x="3.4" y="3.4" width="9.2" height="9.2" fill="#c6c6c6"/><rect x="6.1" y="5.1" width="3.8" height="5.8" fill="none" stroke="#1c1c1c" stroke-width="1.2"/></svg><div style="left:1094px;top:495px;width:14px;height:1px;background:#848d9a"></div><div style="left:1138px;top:495px;width:15px;height:1px;background:#848d9a"></div><span id="t126" class="t" style="font-size:12px;color:#d6d6d6;transform:scaleX(1.0000);left:1123.5px;margin-left:-12.00px;transform-origin:50% 50%;top:487.5px;line-height:16px;height:16px;">場所</span><div style="left:1159px;top:495px;width:81px;height:1px;background:#848d9a"></div><div style="left:1269px;top:495px;width:80px;height:1px;background:#848d9a"></div><span id="t127" class="t" style="font-size:12px;color:#d6d6d6;transform:scaleX(0.9075);left:1254.5px;margin-left:-12.67px;transform-origin:50% 50%;top:487.5px;line-height:16px;height:16px;">GPS</span><div style="left:1094px;top:505px;width:58px;height:46px;border:1px solid #000;background:#1a1a1a"></div><div style="left:1097px;top:508px;width:14px;height:2px;background:#606060"></div><div style="left:1097px;top:512px;width:14px;height:2px;background:#606060"></div><span id="t128" class="t" style="font-size:12px;color:#d6d6d6;transform:scaleX(1.0000);left:1123.2px;margin-left:-12.00px;transform-origin:50% 50%;top:520.75px;line-height:16px;height:16px;">設定</span><div style="left:1159px;top:505px;width:58px;height:46px;border:1px solid #000;background:#1a1a1a"></div><svg style="left:1163px;top:509px" width="12" height="4"><rect width="12" height="4" fill="#6e6e6e"/><polygon points="0,0 12,0 10.6,1.4 1.4,1.4" fill="#a6a6a6"/><rect y="3.2" width="12" height=".8" fill="#5a5a5a"/></svg><span id="t129" class="t" style="font-size:12px;color:#d6d6d6;transform:scaleX(1.0000);left:1188.2px;margin-left:-12.00px;transform-origin:50% 50%;top:520.75px;line-height:16px;height:16px;">接続</span><div style="left:1223px;top:505px;width:58px;height:46px;border:1px solid #000;background:#2e2e2e"></div><span id="t130" class="t" style="font-size:12px;color:#6e6e6e;transform:scaleX(1.0000);left:1252.2px;margin-left:-12.00px;transform-origin:50% 50%;top:520.75px;line-height:16px;height:16px;">同期</span><div style="left:1288px;top:505px;width:58px;height:46px;border:1px solid #000;background:#1a1a1a"></div><div style="left:1291px;top:508px;width:14px;height:2px;background:#606060"></div><div style="left:1291px;top:512px;width:14px;height:2px;background:#606060"></div><span id="t131" class="t" style="font-size:12px;color:#d6d6d6;transform:scaleX(1.0000);left:1317.2px;margin-left:-12.00px;transform-origin:50% 50%;top:520.75px;line-height:16px;height:16px;">選択</span><div style="left:1160px;top:559px;width:189px;height:21px;border:1px solid #000;box-sizing:border-box"></div><div style="left:1094px;top:626px;width:100px;height:1px;background:#848d9a"></div><div style="left:1248px;top:626px;width:101px;height:1px;background:#848d9a"></div><span id="t132" class="t" style="font-size:12px;color:#d6d6d6;transform:scaleX(1.0000);left:1221.5px;margin-left:-24.00px;transform-origin:50% 50%;top:618.5px;line-height:16px;height:16px;">表示切替</span><div style="left:1094px;top:636px;width:58px;height:46px;border:1px solid #000;background:#1a1a1a"></div><div style="left:1100px;top:639px;width:8px;height:8px;border-radius:50%;background:radial-gradient(circle at 38% 32%,#c4c4c4 0,#747474 42%,#3c3c3c 100%)"></div><span id="t133" class="t" style="font-size:12px;color:#d6d6d6;transform:scaleX(1.0000);left:1123.2px;margin-left:-12.00px;transform-origin:50% 50%;top:651.75px;line-height:16px;height:16px;">星図</span><div style="left:1159px;top:636px;width:58px;height:46px;border:1px solid #000;background:#1a1a1a"></div><div style="left:1165px;top:639px;width:8px;height:8px;border-radius:50%;background:radial-gradient(circle at 38% 32%,#c4c4c4 0,#747474 42%,#3c3c3c 100%)"></div><span id="t134" class="t" style="font-size:12px;color:#d6d6d6;transform:scaleX(1.0000);left:1188.2px;margin-left:-12.00px;transform-origin:50% 50%;top:651.75px;line-height:16px;height:16px;">再生</span><div style="left:1223px;top:636px;width:58px;height:46px;border:1px solid #000;background:#1a1a1a"></div><div style="left:1229px;top:639px;width:8px;height:8px;border-radius:50%;background:radial-gradient(circle at 38% 32%,#c4c4c4 0,#747474 42%,#3c3c3c 100%)"></div><span id="t135" class="t" style="font-size:12px;color:#d6d6d6;transform:scaleX(0.7222);left:1252.2px;margin-left:-36.00px;transform-origin:50% 50%;top:651.75px;line-height:16px;height:16px;">ライブビュー</span><div style="left:1288px;top:636px;width:58px;height:46px;border:1px solid #000;background:linear-gradient(#3d3939 50%,#363232 50%)"></div><div style="left:1294px;top:639px;width:8px;height:8px;border-radius:50%;background:radial-gradient(circle at 38% 32%,#ff8a8a 0,#c80000 45%,#600000 100%)"></div><span id="t136" class="t" style="font-size:12px;color:#d6d6d6;transform:scaleX(0.7778);left:1317.2px;margin-left:-36.00px;transform-origin:50% 50%;top:651.75px;line-height:16px;height:16px;">オートガイド</span><div style="left:1094px;top:699px;width:91px;height:1px;background:#848d9a"></div><div style="left:1259px;top:699px;width:90px;height:1px;background:#848d9a"></div><span id="t137" class="t" style="font-size:12px;color:#d6d6d6;transform:scaleX(0.8095);left:1222px;margin-left:-42.00px;transform-origin:50% 50%;top:691.5px;line-height:16px;height:16px;">機器ステータス</span><span id="t138" class="t" style="font-size:12px;color:#d6d6d6;transform:scaleX(1.0167);left:1098.5px;transform-origin:0 50%;top:707.5px;line-height:16px;height:16px;">望遠鏡:</span><div style="left:1148px;top:709px;width:200px;height:18px;background:#000"></div><span id="t139" class="t" style="font-size:12.5px;color:#d6d6d6;transform:scaleX(0.9856);left:1247.5px;margin-left:-70.01px;transform-origin:50% 50%;top:709.5px;line-height:17px;height:17px;">13h53m57.6s +49°54′30″</span><span id="t140" class="t" style="font-size:12px;color:#d6d6d6;transform:scaleX(0.7625);left:1109px;transform-origin:0 50%;top:727.5px;line-height:16px;height:16px;">カメラ:</span><div style="left:1148px;top:729px;width:200px;height:18px;background:#000"></div><span id="t141" class="t" style="font-size:12px;color:#d6d6d6;transform:scaleX(1.0556);left:1247.5px;margin-left:-18.00px;transform-origin:50% 50%;top:730.0px;line-height:16px;height:16px;">待機中</span></div></body></html>
